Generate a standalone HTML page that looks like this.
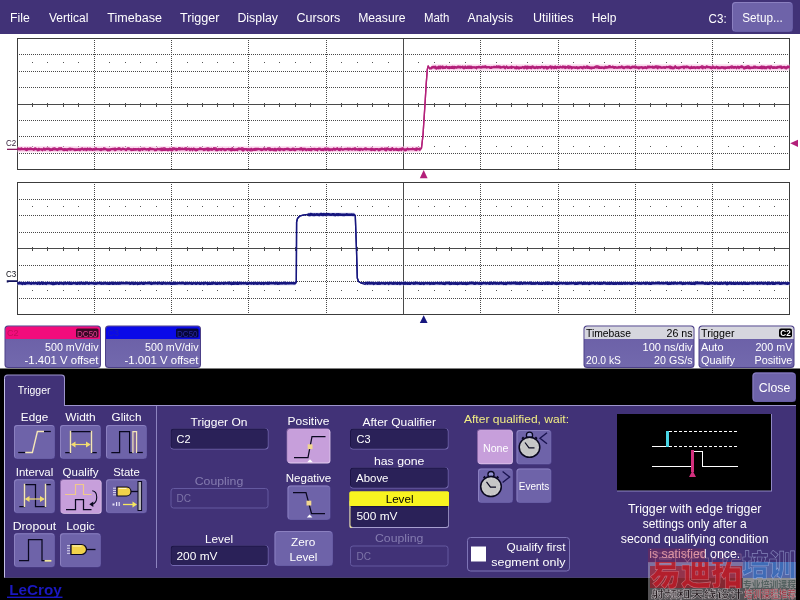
<!DOCTYPE html>
<html lang="en"><head><meta charset="utf-8"><title>LeCroy Trigger Setup</title>
<style>html,body{margin:0;padding:0;background:#fff;overflow:hidden}svg{display:block;position:absolute;left:0;top:0;will-change:transform;-webkit-font-smoothing:antialiased}text{font-family:"Liberation Sans","Noto Sans CJK SC",sans-serif}.cj{font-family:"Liberation Sans","Noto Sans CJK SC",sans-serif;font-weight:900}</style></head><body>
<svg width="800" height="600" viewBox="0 0 800 600">
<rect x="0" y="0" width="800" height="600" fill="#fff"/>
<rect x="0" y="0" width="800" height="34" fill="#413277"/>
<text x="10" y="22" font-size="12.5" fill="#fff" textLength="19.7" lengthAdjust="spacingAndGlyphs">File</text>
<text x="49" y="22" font-size="12.5" fill="#fff" textLength="39.4" lengthAdjust="spacingAndGlyphs">Vertical</text>
<text x="107.3" y="22" font-size="12.5" fill="#fff" textLength="54.7" lengthAdjust="spacingAndGlyphs">Timebase</text>
<text x="180" y="22" font-size="12.5" fill="#fff" textLength="39.4" lengthAdjust="spacingAndGlyphs">Trigger</text>
<text x="237.4" y="22" font-size="12.5" fill="#fff" textLength="40.6" lengthAdjust="spacingAndGlyphs">Display</text>
<text x="296.5" y="22" font-size="12.5" fill="#fff" textLength="43.9" lengthAdjust="spacingAndGlyphs">Cursors</text>
<text x="358.2" y="22" font-size="12.5" fill="#fff" textLength="47.3" lengthAdjust="spacingAndGlyphs">Measure</text>
<text x="424" y="22" font-size="12.5" fill="#fff" textLength="25.4" lengthAdjust="spacingAndGlyphs">Math</text>
<text x="467.6" y="22" font-size="12.5" fill="#fff" textLength="45.4" lengthAdjust="spacingAndGlyphs">Analysis</text>
<text x="533" y="22" font-size="12.5" fill="#fff" textLength="40.5" lengthAdjust="spacingAndGlyphs">Utilities</text>
<text x="591.7" y="22" font-size="12.5" fill="#fff" textLength="24.7" lengthAdjust="spacingAndGlyphs">Help</text>
<text x="708.6" y="23" font-size="12.5" fill="#fff" textLength="18" lengthAdjust="spacingAndGlyphs">C3:</text>
<rect x="732" y="2" width="61" height="30" rx="3.5" fill="#5a4f9a"/>
<rect x="732" y="2" width="60.2" height="29.2" rx="3.5" fill="#8b80c0"/>
<rect x="733" y="3" width="59.2" height="28.2" rx="3.0" fill="#6e63a9"/>
<text x="762.5" y="22" font-size="12.5" fill="#fff" text-anchor="middle" textLength="40.5" lengthAdjust="spacingAndGlyphs">Setup...</text>
<g shape-rendering="crispEdges" fill="none">
<line x1="18.5" y1="54.5" x2="789.5" y2="54.5" stroke="#484848" stroke-width="1" stroke-dasharray="1 1"/>
<line x1="18.5" y1="71.5" x2="789.5" y2="71.5" stroke="#484848" stroke-width="1" stroke-dasharray="1 1"/>
<line x1="18.5" y1="87.5" x2="789.5" y2="87.5" stroke="#484848" stroke-width="1" stroke-dasharray="1 1"/>
<line x1="18.5" y1="120.5" x2="789.5" y2="120.5" stroke="#484848" stroke-width="1" stroke-dasharray="1 1"/>
<line x1="18.5" y1="136.5" x2="789.5" y2="136.5" stroke="#484848" stroke-width="1" stroke-dasharray="1 1"/>
<line x1="18.5" y1="153.5" x2="789.5" y2="153.5" stroke="#484848" stroke-width="1" stroke-dasharray="1 1"/>
<line x1="94.5" y1="39.5" x2="94.5" y2="169.5" stroke="#484848" stroke-width="1" stroke-dasharray="1 1"/>
<line x1="171.5" y1="39.5" x2="171.5" y2="169.5" stroke="#484848" stroke-width="1" stroke-dasharray="1 1"/>
<line x1="248.5" y1="39.5" x2="248.5" y2="169.5" stroke="#484848" stroke-width="1" stroke-dasharray="1 1"/>
<line x1="326.5" y1="39.5" x2="326.5" y2="169.5" stroke="#484848" stroke-width="1" stroke-dasharray="1 1"/>
<line x1="480.5" y1="39.5" x2="480.5" y2="169.5" stroke="#484848" stroke-width="1" stroke-dasharray="1 1"/>
<line x1="558.5" y1="39.5" x2="558.5" y2="169.5" stroke="#484848" stroke-width="1" stroke-dasharray="1 1"/>
<line x1="635.5" y1="39.5" x2="635.5" y2="169.5" stroke="#484848" stroke-width="1" stroke-dasharray="1 1"/>
<line x1="712.5" y1="39.5" x2="712.5" y2="169.5" stroke="#484848" stroke-width="1" stroke-dasharray="1 1"/>
<line x1="17.5" y1="104.5" x2="789.5" y2="104.5" stroke="#4a4a4a" stroke-width="1"/>
<line x1="403.5" y1="38.5" x2="403.5" y2="169.5" stroke="#4a4a4a" stroke-width="1"/>
<line x1="32.5" y1="102.5" x2="32.5" y2="106.5" stroke="#4a4a4a" stroke-width="1"/>
<rect x="32.0" y="62.0" width="1" height="1" fill="#555"/>
<rect x="32.0" y="146.0" width="1" height="1" fill="#555"/>
<line x1="47.5" y1="102.5" x2="47.5" y2="106.5" stroke="#4a4a4a" stroke-width="1"/>
<rect x="47.0" y="62.0" width="1" height="1" fill="#555"/>
<rect x="47.0" y="146.0" width="1" height="1" fill="#555"/>
<line x1="63.5" y1="102.5" x2="63.5" y2="106.5" stroke="#4a4a4a" stroke-width="1"/>
<rect x="63.0" y="62.0" width="1" height="1" fill="#555"/>
<rect x="63.0" y="146.0" width="1" height="1" fill="#555"/>
<line x1="78.5" y1="102.5" x2="78.5" y2="106.5" stroke="#4a4a4a" stroke-width="1"/>
<rect x="78.0" y="62.0" width="1" height="1" fill="#555"/>
<rect x="78.0" y="146.0" width="1" height="1" fill="#555"/>
<line x1="109.5" y1="102.5" x2="109.5" y2="106.5" stroke="#4a4a4a" stroke-width="1"/>
<rect x="109.0" y="62.0" width="1" height="1" fill="#555"/>
<rect x="109.0" y="146.0" width="1" height="1" fill="#555"/>
<line x1="125.5" y1="102.5" x2="125.5" y2="106.5" stroke="#4a4a4a" stroke-width="1"/>
<rect x="125.0" y="62.0" width="1" height="1" fill="#555"/>
<rect x="125.0" y="146.0" width="1" height="1" fill="#555"/>
<line x1="140.5" y1="102.5" x2="140.5" y2="106.5" stroke="#4a4a4a" stroke-width="1"/>
<rect x="140.0" y="62.0" width="1" height="1" fill="#555"/>
<rect x="140.0" y="146.0" width="1" height="1" fill="#555"/>
<line x1="156.5" y1="102.5" x2="156.5" y2="106.5" stroke="#4a4a4a" stroke-width="1"/>
<rect x="156.0" y="62.0" width="1" height="1" fill="#555"/>
<rect x="156.0" y="146.0" width="1" height="1" fill="#555"/>
<line x1="187.5" y1="102.5" x2="187.5" y2="106.5" stroke="#4a4a4a" stroke-width="1"/>
<rect x="187.0" y="62.0" width="1" height="1" fill="#555"/>
<rect x="187.0" y="146.0" width="1" height="1" fill="#555"/>
<line x1="202.5" y1="102.5" x2="202.5" y2="106.5" stroke="#4a4a4a" stroke-width="1"/>
<rect x="202.0" y="62.0" width="1" height="1" fill="#555"/>
<rect x="202.0" y="146.0" width="1" height="1" fill="#555"/>
<line x1="217.5" y1="102.5" x2="217.5" y2="106.5" stroke="#4a4a4a" stroke-width="1"/>
<rect x="217.0" y="62.0" width="1" height="1" fill="#555"/>
<rect x="217.0" y="146.0" width="1" height="1" fill="#555"/>
<line x1="233.5" y1="102.5" x2="233.5" y2="106.5" stroke="#4a4a4a" stroke-width="1"/>
<rect x="233.0" y="62.0" width="1" height="1" fill="#555"/>
<rect x="233.0" y="146.0" width="1" height="1" fill="#555"/>
<line x1="264.5" y1="102.5" x2="264.5" y2="106.5" stroke="#4a4a4a" stroke-width="1"/>
<rect x="264.0" y="62.0" width="1" height="1" fill="#555"/>
<rect x="264.0" y="146.0" width="1" height="1" fill="#555"/>
<line x1="279.5" y1="102.5" x2="279.5" y2="106.5" stroke="#4a4a4a" stroke-width="1"/>
<rect x="279.0" y="62.0" width="1" height="1" fill="#555"/>
<rect x="279.0" y="146.0" width="1" height="1" fill="#555"/>
<line x1="295.5" y1="102.5" x2="295.5" y2="106.5" stroke="#4a4a4a" stroke-width="1"/>
<rect x="295.0" y="62.0" width="1" height="1" fill="#555"/>
<rect x="295.0" y="146.0" width="1" height="1" fill="#555"/>
<line x1="310.5" y1="102.5" x2="310.5" y2="106.5" stroke="#4a4a4a" stroke-width="1"/>
<rect x="310.0" y="62.0" width="1" height="1" fill="#555"/>
<rect x="310.0" y="146.0" width="1" height="1" fill="#555"/>
<line x1="341.5" y1="102.5" x2="341.5" y2="106.5" stroke="#4a4a4a" stroke-width="1"/>
<rect x="341.0" y="62.0" width="1" height="1" fill="#555"/>
<rect x="341.0" y="146.0" width="1" height="1" fill="#555"/>
<line x1="357.5" y1="102.5" x2="357.5" y2="106.5" stroke="#4a4a4a" stroke-width="1"/>
<rect x="357.0" y="62.0" width="1" height="1" fill="#555"/>
<rect x="357.0" y="146.0" width="1" height="1" fill="#555"/>
<line x1="372.5" y1="102.5" x2="372.5" y2="106.5" stroke="#4a4a4a" stroke-width="1"/>
<rect x="372.0" y="62.0" width="1" height="1" fill="#555"/>
<rect x="372.0" y="146.0" width="1" height="1" fill="#555"/>
<line x1="388.5" y1="102.5" x2="388.5" y2="106.5" stroke="#4a4a4a" stroke-width="1"/>
<rect x="388.0" y="62.0" width="1" height="1" fill="#555"/>
<rect x="388.0" y="146.0" width="1" height="1" fill="#555"/>
<line x1="418.5" y1="102.5" x2="418.5" y2="106.5" stroke="#4a4a4a" stroke-width="1"/>
<rect x="418.0" y="62.0" width="1" height="1" fill="#555"/>
<rect x="418.0" y="146.0" width="1" height="1" fill="#555"/>
<line x1="434.5" y1="102.5" x2="434.5" y2="106.5" stroke="#4a4a4a" stroke-width="1"/>
<rect x="434.0" y="62.0" width="1" height="1" fill="#555"/>
<rect x="434.0" y="146.0" width="1" height="1" fill="#555"/>
<line x1="449.5" y1="102.5" x2="449.5" y2="106.5" stroke="#4a4a4a" stroke-width="1"/>
<rect x="449.0" y="62.0" width="1" height="1" fill="#555"/>
<rect x="449.0" y="146.0" width="1" height="1" fill="#555"/>
<line x1="465.5" y1="102.5" x2="465.5" y2="106.5" stroke="#4a4a4a" stroke-width="1"/>
<rect x="465.0" y="62.0" width="1" height="1" fill="#555"/>
<rect x="465.0" y="146.0" width="1" height="1" fill="#555"/>
<line x1="496.5" y1="102.5" x2="496.5" y2="106.5" stroke="#4a4a4a" stroke-width="1"/>
<rect x="496.0" y="62.0" width="1" height="1" fill="#555"/>
<rect x="496.0" y="146.0" width="1" height="1" fill="#555"/>
<line x1="511.5" y1="102.5" x2="511.5" y2="106.5" stroke="#4a4a4a" stroke-width="1"/>
<rect x="511.0" y="62.0" width="1" height="1" fill="#555"/>
<rect x="511.0" y="146.0" width="1" height="1" fill="#555"/>
<line x1="527.5" y1="102.5" x2="527.5" y2="106.5" stroke="#4a4a4a" stroke-width="1"/>
<rect x="527.0" y="62.0" width="1" height="1" fill="#555"/>
<rect x="527.0" y="146.0" width="1" height="1" fill="#555"/>
<line x1="542.5" y1="102.5" x2="542.5" y2="106.5" stroke="#4a4a4a" stroke-width="1"/>
<rect x="542.0" y="62.0" width="1" height="1" fill="#555"/>
<rect x="542.0" y="146.0" width="1" height="1" fill="#555"/>
<line x1="573.5" y1="102.5" x2="573.5" y2="106.5" stroke="#4a4a4a" stroke-width="1"/>
<rect x="573.0" y="62.0" width="1" height="1" fill="#555"/>
<rect x="573.0" y="146.0" width="1" height="1" fill="#555"/>
<line x1="589.5" y1="102.5" x2="589.5" y2="106.5" stroke="#4a4a4a" stroke-width="1"/>
<rect x="589.0" y="62.0" width="1" height="1" fill="#555"/>
<rect x="589.0" y="146.0" width="1" height="1" fill="#555"/>
<line x1="604.5" y1="102.5" x2="604.5" y2="106.5" stroke="#4a4a4a" stroke-width="1"/>
<rect x="604.0" y="62.0" width="1" height="1" fill="#555"/>
<rect x="604.0" y="146.0" width="1" height="1" fill="#555"/>
<line x1="619.5" y1="102.5" x2="619.5" y2="106.5" stroke="#4a4a4a" stroke-width="1"/>
<rect x="619.0" y="62.0" width="1" height="1" fill="#555"/>
<rect x="619.0" y="146.0" width="1" height="1" fill="#555"/>
<line x1="650.5" y1="102.5" x2="650.5" y2="106.5" stroke="#4a4a4a" stroke-width="1"/>
<rect x="650.0" y="62.0" width="1" height="1" fill="#555"/>
<rect x="650.0" y="146.0" width="1" height="1" fill="#555"/>
<line x1="666.5" y1="102.5" x2="666.5" y2="106.5" stroke="#4a4a4a" stroke-width="1"/>
<rect x="666.0" y="62.0" width="1" height="1" fill="#555"/>
<rect x="666.0" y="146.0" width="1" height="1" fill="#555"/>
<line x1="681.5" y1="102.5" x2="681.5" y2="106.5" stroke="#4a4a4a" stroke-width="1"/>
<rect x="681.0" y="62.0" width="1" height="1" fill="#555"/>
<rect x="681.0" y="146.0" width="1" height="1" fill="#555"/>
<line x1="697.5" y1="102.5" x2="697.5" y2="106.5" stroke="#4a4a4a" stroke-width="1"/>
<rect x="697.0" y="62.0" width="1" height="1" fill="#555"/>
<rect x="697.0" y="146.0" width="1" height="1" fill="#555"/>
<line x1="728.5" y1="102.5" x2="728.5" y2="106.5" stroke="#4a4a4a" stroke-width="1"/>
<rect x="728.0" y="62.0" width="1" height="1" fill="#555"/>
<rect x="728.0" y="146.0" width="1" height="1" fill="#555"/>
<line x1="743.5" y1="102.5" x2="743.5" y2="106.5" stroke="#4a4a4a" stroke-width="1"/>
<rect x="743.0" y="62.0" width="1" height="1" fill="#555"/>
<rect x="743.0" y="146.0" width="1" height="1" fill="#555"/>
<line x1="759.5" y1="102.5" x2="759.5" y2="106.5" stroke="#4a4a4a" stroke-width="1"/>
<rect x="759.0" y="62.0" width="1" height="1" fill="#555"/>
<rect x="759.0" y="146.0" width="1" height="1" fill="#555"/>
<line x1="774.5" y1="102.5" x2="774.5" y2="106.5" stroke="#4a4a4a" stroke-width="1"/>
<rect x="774.0" y="62.0" width="1" height="1" fill="#555"/>
<rect x="774.0" y="146.0" width="1" height="1" fill="#555"/>
<rect x="17.5" y="38.5" width="772.0" height="131.0" stroke="#3c3c3c" stroke-width="1"/>
</g>
<g shape-rendering="crispEdges" fill="none">
<line x1="18.5" y1="199.5" x2="789.5" y2="199.5" stroke="#484848" stroke-width="1" stroke-dasharray="1 1"/>
<line x1="18.5" y1="215.5" x2="789.5" y2="215.5" stroke="#484848" stroke-width="1" stroke-dasharray="1 1"/>
<line x1="18.5" y1="232.5" x2="789.5" y2="232.5" stroke="#484848" stroke-width="1" stroke-dasharray="1 1"/>
<line x1="18.5" y1="265.5" x2="789.5" y2="265.5" stroke="#484848" stroke-width="1" stroke-dasharray="1 1"/>
<line x1="18.5" y1="281.5" x2="789.5" y2="281.5" stroke="#484848" stroke-width="1" stroke-dasharray="1 1"/>
<line x1="18.5" y1="298.5" x2="789.5" y2="298.5" stroke="#484848" stroke-width="1" stroke-dasharray="1 1"/>
<line x1="94.5" y1="183.5" x2="94.5" y2="314.5" stroke="#484848" stroke-width="1" stroke-dasharray="1 1"/>
<line x1="171.5" y1="183.5" x2="171.5" y2="314.5" stroke="#484848" stroke-width="1" stroke-dasharray="1 1"/>
<line x1="248.5" y1="183.5" x2="248.5" y2="314.5" stroke="#484848" stroke-width="1" stroke-dasharray="1 1"/>
<line x1="326.5" y1="183.5" x2="326.5" y2="314.5" stroke="#484848" stroke-width="1" stroke-dasharray="1 1"/>
<line x1="480.5" y1="183.5" x2="480.5" y2="314.5" stroke="#484848" stroke-width="1" stroke-dasharray="1 1"/>
<line x1="558.5" y1="183.5" x2="558.5" y2="314.5" stroke="#484848" stroke-width="1" stroke-dasharray="1 1"/>
<line x1="635.5" y1="183.5" x2="635.5" y2="314.5" stroke="#484848" stroke-width="1" stroke-dasharray="1 1"/>
<line x1="712.5" y1="183.5" x2="712.5" y2="314.5" stroke="#484848" stroke-width="1" stroke-dasharray="1 1"/>
<line x1="17.5" y1="248.5" x2="789.5" y2="248.5" stroke="#4a4a4a" stroke-width="1"/>
<line x1="403.5" y1="182.5" x2="403.5" y2="314.5" stroke="#4a4a4a" stroke-width="1"/>
<line x1="32.5" y1="246.5" x2="32.5" y2="250.5" stroke="#4a4a4a" stroke-width="1"/>
<rect x="32.0" y="206.0" width="1" height="1" fill="#555"/>
<rect x="32.0" y="290.0" width="1" height="1" fill="#555"/>
<line x1="47.5" y1="246.5" x2="47.5" y2="250.5" stroke="#4a4a4a" stroke-width="1"/>
<rect x="47.0" y="206.0" width="1" height="1" fill="#555"/>
<rect x="47.0" y="290.0" width="1" height="1" fill="#555"/>
<line x1="63.5" y1="246.5" x2="63.5" y2="250.5" stroke="#4a4a4a" stroke-width="1"/>
<rect x="63.0" y="206.0" width="1" height="1" fill="#555"/>
<rect x="63.0" y="290.0" width="1" height="1" fill="#555"/>
<line x1="78.5" y1="246.5" x2="78.5" y2="250.5" stroke="#4a4a4a" stroke-width="1"/>
<rect x="78.0" y="206.0" width="1" height="1" fill="#555"/>
<rect x="78.0" y="290.0" width="1" height="1" fill="#555"/>
<line x1="109.5" y1="246.5" x2="109.5" y2="250.5" stroke="#4a4a4a" stroke-width="1"/>
<rect x="109.0" y="206.0" width="1" height="1" fill="#555"/>
<rect x="109.0" y="290.0" width="1" height="1" fill="#555"/>
<line x1="125.5" y1="246.5" x2="125.5" y2="250.5" stroke="#4a4a4a" stroke-width="1"/>
<rect x="125.0" y="206.0" width="1" height="1" fill="#555"/>
<rect x="125.0" y="290.0" width="1" height="1" fill="#555"/>
<line x1="140.5" y1="246.5" x2="140.5" y2="250.5" stroke="#4a4a4a" stroke-width="1"/>
<rect x="140.0" y="206.0" width="1" height="1" fill="#555"/>
<rect x="140.0" y="290.0" width="1" height="1" fill="#555"/>
<line x1="156.5" y1="246.5" x2="156.5" y2="250.5" stroke="#4a4a4a" stroke-width="1"/>
<rect x="156.0" y="206.0" width="1" height="1" fill="#555"/>
<rect x="156.0" y="290.0" width="1" height="1" fill="#555"/>
<line x1="187.5" y1="246.5" x2="187.5" y2="250.5" stroke="#4a4a4a" stroke-width="1"/>
<rect x="187.0" y="206.0" width="1" height="1" fill="#555"/>
<rect x="187.0" y="290.0" width="1" height="1" fill="#555"/>
<line x1="202.5" y1="246.5" x2="202.5" y2="250.5" stroke="#4a4a4a" stroke-width="1"/>
<rect x="202.0" y="206.0" width="1" height="1" fill="#555"/>
<rect x="202.0" y="290.0" width="1" height="1" fill="#555"/>
<line x1="217.5" y1="246.5" x2="217.5" y2="250.5" stroke="#4a4a4a" stroke-width="1"/>
<rect x="217.0" y="206.0" width="1" height="1" fill="#555"/>
<rect x="217.0" y="290.0" width="1" height="1" fill="#555"/>
<line x1="233.5" y1="246.5" x2="233.5" y2="250.5" stroke="#4a4a4a" stroke-width="1"/>
<rect x="233.0" y="206.0" width="1" height="1" fill="#555"/>
<rect x="233.0" y="290.0" width="1" height="1" fill="#555"/>
<line x1="264.5" y1="246.5" x2="264.5" y2="250.5" stroke="#4a4a4a" stroke-width="1"/>
<rect x="264.0" y="206.0" width="1" height="1" fill="#555"/>
<rect x="264.0" y="290.0" width="1" height="1" fill="#555"/>
<line x1="279.5" y1="246.5" x2="279.5" y2="250.5" stroke="#4a4a4a" stroke-width="1"/>
<rect x="279.0" y="206.0" width="1" height="1" fill="#555"/>
<rect x="279.0" y="290.0" width="1" height="1" fill="#555"/>
<line x1="295.5" y1="246.5" x2="295.5" y2="250.5" stroke="#4a4a4a" stroke-width="1"/>
<rect x="295.0" y="206.0" width="1" height="1" fill="#555"/>
<rect x="295.0" y="290.0" width="1" height="1" fill="#555"/>
<line x1="310.5" y1="246.5" x2="310.5" y2="250.5" stroke="#4a4a4a" stroke-width="1"/>
<rect x="310.0" y="206.0" width="1" height="1" fill="#555"/>
<rect x="310.0" y="290.0" width="1" height="1" fill="#555"/>
<line x1="341.5" y1="246.5" x2="341.5" y2="250.5" stroke="#4a4a4a" stroke-width="1"/>
<rect x="341.0" y="206.0" width="1" height="1" fill="#555"/>
<rect x="341.0" y="290.0" width="1" height="1" fill="#555"/>
<line x1="357.5" y1="246.5" x2="357.5" y2="250.5" stroke="#4a4a4a" stroke-width="1"/>
<rect x="357.0" y="206.0" width="1" height="1" fill="#555"/>
<rect x="357.0" y="290.0" width="1" height="1" fill="#555"/>
<line x1="372.5" y1="246.5" x2="372.5" y2="250.5" stroke="#4a4a4a" stroke-width="1"/>
<rect x="372.0" y="206.0" width="1" height="1" fill="#555"/>
<rect x="372.0" y="290.0" width="1" height="1" fill="#555"/>
<line x1="388.5" y1="246.5" x2="388.5" y2="250.5" stroke="#4a4a4a" stroke-width="1"/>
<rect x="388.0" y="206.0" width="1" height="1" fill="#555"/>
<rect x="388.0" y="290.0" width="1" height="1" fill="#555"/>
<line x1="418.5" y1="246.5" x2="418.5" y2="250.5" stroke="#4a4a4a" stroke-width="1"/>
<rect x="418.0" y="206.0" width="1" height="1" fill="#555"/>
<rect x="418.0" y="290.0" width="1" height="1" fill="#555"/>
<line x1="434.5" y1="246.5" x2="434.5" y2="250.5" stroke="#4a4a4a" stroke-width="1"/>
<rect x="434.0" y="206.0" width="1" height="1" fill="#555"/>
<rect x="434.0" y="290.0" width="1" height="1" fill="#555"/>
<line x1="449.5" y1="246.5" x2="449.5" y2="250.5" stroke="#4a4a4a" stroke-width="1"/>
<rect x="449.0" y="206.0" width="1" height="1" fill="#555"/>
<rect x="449.0" y="290.0" width="1" height="1" fill="#555"/>
<line x1="465.5" y1="246.5" x2="465.5" y2="250.5" stroke="#4a4a4a" stroke-width="1"/>
<rect x="465.0" y="206.0" width="1" height="1" fill="#555"/>
<rect x="465.0" y="290.0" width="1" height="1" fill="#555"/>
<line x1="496.5" y1="246.5" x2="496.5" y2="250.5" stroke="#4a4a4a" stroke-width="1"/>
<rect x="496.0" y="206.0" width="1" height="1" fill="#555"/>
<rect x="496.0" y="290.0" width="1" height="1" fill="#555"/>
<line x1="511.5" y1="246.5" x2="511.5" y2="250.5" stroke="#4a4a4a" stroke-width="1"/>
<rect x="511.0" y="206.0" width="1" height="1" fill="#555"/>
<rect x="511.0" y="290.0" width="1" height="1" fill="#555"/>
<line x1="527.5" y1="246.5" x2="527.5" y2="250.5" stroke="#4a4a4a" stroke-width="1"/>
<rect x="527.0" y="206.0" width="1" height="1" fill="#555"/>
<rect x="527.0" y="290.0" width="1" height="1" fill="#555"/>
<line x1="542.5" y1="246.5" x2="542.5" y2="250.5" stroke="#4a4a4a" stroke-width="1"/>
<rect x="542.0" y="206.0" width="1" height="1" fill="#555"/>
<rect x="542.0" y="290.0" width="1" height="1" fill="#555"/>
<line x1="573.5" y1="246.5" x2="573.5" y2="250.5" stroke="#4a4a4a" stroke-width="1"/>
<rect x="573.0" y="206.0" width="1" height="1" fill="#555"/>
<rect x="573.0" y="290.0" width="1" height="1" fill="#555"/>
<line x1="589.5" y1="246.5" x2="589.5" y2="250.5" stroke="#4a4a4a" stroke-width="1"/>
<rect x="589.0" y="206.0" width="1" height="1" fill="#555"/>
<rect x="589.0" y="290.0" width="1" height="1" fill="#555"/>
<line x1="604.5" y1="246.5" x2="604.5" y2="250.5" stroke="#4a4a4a" stroke-width="1"/>
<rect x="604.0" y="206.0" width="1" height="1" fill="#555"/>
<rect x="604.0" y="290.0" width="1" height="1" fill="#555"/>
<line x1="619.5" y1="246.5" x2="619.5" y2="250.5" stroke="#4a4a4a" stroke-width="1"/>
<rect x="619.0" y="206.0" width="1" height="1" fill="#555"/>
<rect x="619.0" y="290.0" width="1" height="1" fill="#555"/>
<line x1="650.5" y1="246.5" x2="650.5" y2="250.5" stroke="#4a4a4a" stroke-width="1"/>
<rect x="650.0" y="206.0" width="1" height="1" fill="#555"/>
<rect x="650.0" y="290.0" width="1" height="1" fill="#555"/>
<line x1="666.5" y1="246.5" x2="666.5" y2="250.5" stroke="#4a4a4a" stroke-width="1"/>
<rect x="666.0" y="206.0" width="1" height="1" fill="#555"/>
<rect x="666.0" y="290.0" width="1" height="1" fill="#555"/>
<line x1="681.5" y1="246.5" x2="681.5" y2="250.5" stroke="#4a4a4a" stroke-width="1"/>
<rect x="681.0" y="206.0" width="1" height="1" fill="#555"/>
<rect x="681.0" y="290.0" width="1" height="1" fill="#555"/>
<line x1="697.5" y1="246.5" x2="697.5" y2="250.5" stroke="#4a4a4a" stroke-width="1"/>
<rect x="697.0" y="206.0" width="1" height="1" fill="#555"/>
<rect x="697.0" y="290.0" width="1" height="1" fill="#555"/>
<line x1="728.5" y1="246.5" x2="728.5" y2="250.5" stroke="#4a4a4a" stroke-width="1"/>
<rect x="728.0" y="206.0" width="1" height="1" fill="#555"/>
<rect x="728.0" y="290.0" width="1" height="1" fill="#555"/>
<line x1="743.5" y1="246.5" x2="743.5" y2="250.5" stroke="#4a4a4a" stroke-width="1"/>
<rect x="743.0" y="206.0" width="1" height="1" fill="#555"/>
<rect x="743.0" y="290.0" width="1" height="1" fill="#555"/>
<line x1="759.5" y1="246.5" x2="759.5" y2="250.5" stroke="#4a4a4a" stroke-width="1"/>
<rect x="759.0" y="206.0" width="1" height="1" fill="#555"/>
<rect x="759.0" y="290.0" width="1" height="1" fill="#555"/>
<line x1="774.5" y1="246.5" x2="774.5" y2="250.5" stroke="#4a4a4a" stroke-width="1"/>
<rect x="774.0" y="206.0" width="1" height="1" fill="#555"/>
<rect x="774.0" y="290.0" width="1" height="1" fill="#555"/>
<rect x="17.5" y="182.5" width="772.0" height="132.0" stroke="#3c3c3c" stroke-width="1"/>
</g>
<rect x="17.5" y="146.3" width="403.0" height="6" fill="#f9c6e6" opacity="0.7"/>
<rect x="431.5" y="64.4" width="358.0" height="6" fill="#f9c6e6" opacity="0.7"/>
<rect x="17.5" y="148.3" width="403.0" height="2.0" fill="#b3207a" opacity="1"/>
<rect x="431.5" y="66.4" width="358.0" height="2.0" fill="#b3207a" opacity="1"/>
<path d="M17.5,148.8 L18.8,148.3 L20.0,149.8 L21.2,148.0 L22.5,149.4 L23.8,148.9 L25.0,148.0 L26.2,149.3 L27.5,147.9 L28.8,149.1 L30.0,148.0 L31.2,148.1 L32.5,149.1 L33.8,150.3 L35.0,148.2 L36.2,148.5 L37.5,149.7 L38.8,150.6 L40.0,149.5 L41.2,149.0 L42.5,150.7 L43.8,147.9 L45.0,150.4 L46.2,148.7 L47.5,148.2 L48.8,148.2 L50.0,148.7 L51.2,150.2 L52.5,148.3 L53.8,149.5 L55.0,149.7 L56.2,148.9 L57.5,149.4 L58.8,148.0 L60.0,148.0 L61.2,148.4 L62.5,149.8 L63.8,149.1 L65.0,148.7 L66.2,149.6 L67.5,149.2 L68.8,148.7 L70.0,150.2 L71.2,149.9 L72.5,148.5 L73.8,149.5 L75.0,149.4 L76.2,150.4 L77.5,150.0 L78.8,148.7 L80.0,150.7 L81.2,148.2 L82.5,149.1 L83.8,150.1 L85.0,148.3 L86.2,149.3 L87.5,147.9 L88.8,149.8 L90.0,150.1 L91.2,149.5 L92.5,150.4 L93.8,148.7 L95.0,149.9 L96.2,149.6 L97.5,149.5 L98.8,149.2 L100.0,150.3 L101.2,150.6 L102.5,149.2 L103.8,149.8 L105.0,148.0 L106.2,149.9 L107.5,149.7 L108.8,150.8 L110.0,150.3 L111.2,148.7 L112.5,149.0 L113.8,149.8 L115.0,147.9 L116.2,149.2 L117.5,148.3 L118.8,148.2 L120.0,148.0 L121.2,150.1 L122.5,148.2 L123.8,148.5 L125.0,149.0 L126.2,150.4 L127.5,148.0 L128.8,149.1 L130.0,149.4 L131.2,150.5 L132.5,150.3 L133.8,150.4 L135.0,148.6 L136.2,149.0 L137.5,148.9 L138.8,150.5 L140.0,150.7 L141.2,148.3 L142.5,148.3 L143.8,148.5 L145.0,148.5 L146.2,149.3 L147.5,149.6 L148.8,148.6 L150.0,147.8 L151.2,149.1 L152.5,148.9 L153.8,149.5 L155.0,150.7 L156.2,149.9 L157.5,149.3 L158.8,149.7 L160.0,149.8 L161.2,148.0 L162.5,150.5 L163.8,150.1 L165.0,150.4 L166.2,150.2 L167.5,149.0 L168.8,149.0 L170.0,148.1 L171.2,149.7 L172.5,148.0 L173.8,148.0 L175.0,148.4 L176.2,148.3 L177.5,148.8 L178.8,148.0 L180.0,147.8 L181.2,148.3 L182.5,148.1 L183.8,148.9 L185.0,147.9 L186.2,150.4 L187.5,149.6 L188.8,148.2 L190.0,148.6 L191.2,148.8 L192.5,148.9 L193.8,148.2 L195.0,150.3 L196.2,150.8 L197.5,149.2 L198.8,149.3 L200.0,148.1 L201.2,148.1 L202.5,148.8 L203.8,148.6 L205.0,150.3 L206.2,148.3 L207.5,147.9 L208.8,150.7 L210.0,149.4 L211.2,148.2 L212.5,149.4 L213.8,147.9 L215.0,149.4 L216.2,150.7 L217.5,150.4 L218.8,149.9 L220.0,148.6 L221.2,148.9 L222.5,148.3 L223.8,150.1 L225.0,149.4 L226.2,150.1 L227.5,148.8 L228.8,148.5 L230.0,150.2 L231.2,150.8 L232.5,150.4 L233.8,150.2 L235.0,150.3 L236.2,150.0 L237.5,148.5 L238.8,149.4 L240.0,148.9 L241.2,147.9 L242.5,147.9 L243.8,148.6 L245.0,148.6 L246.2,149.9 L247.5,150.7 L248.8,149.1 L250.0,150.6 L251.2,150.8 L252.5,150.7 L253.8,148.9 L255.0,148.5 L256.2,148.5 L257.5,148.4 L258.8,148.4 L260.0,149.7 L261.2,150.5 L262.5,150.3 L263.8,149.2 L265.0,149.8 L266.2,150.2 L267.5,148.1 L268.8,149.8 L270.0,150.5 L271.2,150.1 L272.5,150.1 L273.8,149.2 L275.0,148.3 L276.2,150.2 L277.5,148.8 L278.8,150.2 L280.0,150.7 L281.2,149.0 L282.5,149.0 L283.8,150.6 L285.0,150.0 L286.2,148.3 L287.5,148.2 L288.8,148.3 L290.0,150.5 L291.2,150.2 L292.5,148.2 L293.8,150.3 L295.0,150.7 L296.2,149.8 L297.5,148.9 L298.8,149.4 L300.0,148.2 L301.2,147.8 L302.5,150.7 L303.8,149.7 L305.0,149.4 L306.2,150.6 L307.5,149.1 L308.8,150.4 L310.0,150.3 L311.2,148.4 L312.5,148.6 L313.8,148.7 L315.0,148.5 L316.2,149.6 L317.5,148.6 L318.8,149.1 L320.0,148.2 L321.2,150.5 L322.5,148.9 L323.8,149.2 L325.0,149.6 L326.2,150.5 L327.5,149.1 L328.8,150.6 L330.0,149.3 L331.2,149.4 L332.5,149.4 L333.8,147.9 L335.0,149.1 L336.2,148.3 L337.5,147.8 L338.8,150.2 L340.0,148.3 L341.2,149.2 L342.5,150.0 L343.8,149.5 L345.0,148.8 L346.2,149.4 L347.5,149.5 L348.8,150.2 L350.0,148.1 L351.2,149.5 L352.5,148.5 L353.8,148.6 L355.0,150.1 L356.2,149.3 L357.5,149.5 L358.8,150.1 L360.0,150.5 L361.2,149.1 L362.5,149.6 L363.8,149.3 L365.0,149.3 L366.2,149.9 L367.5,149.2 L368.8,149.4 L370.0,149.2 L371.2,150.6 L372.5,149.9 L373.8,150.4 L375.0,150.6 L376.2,148.6 L377.5,149.5 L378.8,150.6 L380.0,150.3 L381.2,148.2 L382.5,148.2 L383.8,149.1 L385.0,148.0 L386.2,148.5 L387.5,148.0 L388.8,149.8 L390.0,150.2 L391.2,150.5 L392.5,148.3 L393.8,149.9 L395.0,149.8 L396.2,148.2 L397.5,150.4 L398.8,150.7 L400.0,148.5 L401.2,150.7 L402.5,149.0 L403.8,149.3 L405.0,150.8 L406.2,150.3 L407.5,148.3 L408.8,149.1 L410.0,149.3 L411.2,148.8 L412.5,148.4 L413.8,148.8 L415.0,150.0 L416.2,147.9 L417.5,149.5 L418.8,149.1 L420.0,147.9 L420.5,149.3 L421.5,148.0 L423.0,135.0 L425.0,104.0 L426.2,84.0 L427.3,69.5 L428.2,66.0 L429.8,68.8 L431.5,66.9 L432.8,67.8 L434.0,67.4 L435.2,66.1 L436.5,68.9 L437.8,68.3 L439.0,68.8 L440.2,66.2 L441.5,66.7 L442.8,66.0 L444.0,68.2 L445.2,66.7 L446.5,66.3 L447.8,67.2 L449.0,68.6 L450.2,68.4 L451.5,66.7 L452.8,66.3 L454.0,68.7 L455.2,67.6 L456.5,68.0 L457.8,66.2 L459.0,66.1 L460.2,68.0 L461.5,67.2 L462.8,66.1 L464.0,68.7 L465.2,67.8 L466.5,68.3 L467.8,66.2 L469.0,68.5 L470.2,66.1 L471.5,68.5 L472.8,67.3 L474.0,66.9 L475.2,67.6 L476.5,68.7 L477.8,66.7 L479.0,66.3 L480.2,67.5 L481.5,66.6 L482.8,66.2 L484.0,66.4 L485.2,66.1 L486.5,66.5 L487.8,66.8 L489.0,66.8 L490.2,68.2 L491.5,66.8 L492.8,67.4 L494.0,66.4 L495.2,66.9 L496.5,66.0 L497.8,66.7 L499.0,65.9 L500.2,68.1 L501.5,67.6 L502.8,66.5 L504.0,67.3 L505.2,68.7 L506.5,66.2 L507.8,68.4 L509.0,67.2 L510.2,67.4 L511.5,68.4 L512.8,67.1 L514.0,67.4 L515.2,68.0 L516.5,68.8 L517.8,66.9 L519.0,68.4 L520.2,68.0 L521.5,67.8 L522.8,67.1 L524.0,66.9 L525.2,66.1 L526.5,66.3 L527.8,66.1 L529.0,68.1 L530.2,66.7 L531.5,66.4 L532.8,66.2 L534.0,68.4 L535.2,68.5 L536.5,67.9 L537.8,66.7 L539.0,66.6 L540.2,66.8 L541.5,67.3 L542.8,66.4 L544.0,67.2 L545.2,66.7 L546.5,68.8 L547.8,68.8 L549.0,67.5 L550.2,66.6 L551.5,68.8 L552.8,66.8 L554.0,67.0 L555.2,65.9 L556.5,67.0 L557.8,67.3 L559.0,67.4 L560.2,66.5 L561.5,67.4 L562.8,65.9 L564.0,66.7 L565.2,66.2 L566.5,67.1 L567.8,66.0 L569.0,66.0 L570.2,66.8 L571.5,66.6 L572.8,67.7 L574.0,67.5 L575.2,68.2 L576.5,67.9 L577.8,68.0 L579.0,68.5 L580.2,67.1 L581.5,66.9 L582.8,68.9 L584.0,66.3 L585.2,68.1 L586.5,67.8 L587.8,66.0 L589.0,68.4 L590.2,68.6 L591.5,67.8 L592.8,68.1 L594.0,68.3 L595.2,66.3 L596.5,67.5 L597.8,67.4 L599.0,68.4 L600.2,68.3 L601.5,68.4 L602.8,67.7 L604.0,68.6 L605.2,67.9 L606.5,68.0 L607.8,66.6 L609.0,66.0 L610.2,66.3 L611.5,67.0 L612.8,66.2 L614.0,68.4 L615.2,67.6 L616.5,67.8 L617.8,67.8 L619.0,67.9 L620.2,67.4 L621.5,65.9 L622.8,68.3 L624.0,68.1 L625.2,67.4 L626.5,67.5 L627.8,67.9 L629.0,66.1 L630.2,68.1 L631.5,66.7 L632.8,66.1 L634.0,66.7 L635.2,68.1 L636.5,66.5 L637.8,68.1 L639.0,68.8 L640.2,67.4 L641.5,67.0 L642.8,67.3 L644.0,68.0 L645.2,68.2 L646.5,67.8 L647.8,67.8 L649.0,66.1 L650.2,66.3 L651.5,66.7 L652.8,68.1 L654.0,66.8 L655.2,67.6 L656.5,65.9 L657.8,66.1 L659.0,66.7 L660.2,67.9 L661.5,68.0 L662.8,67.9 L664.0,66.8 L665.2,67.4 L666.5,67.3 L667.8,67.3 L669.0,66.3 L670.2,68.6 L671.5,66.5 L672.8,68.8 L674.0,68.7 L675.2,66.0 L676.5,67.3 L677.8,68.4 L679.0,68.8 L680.2,67.2 L681.5,66.7 L682.8,66.5 L684.0,68.7 L685.2,66.5 L686.5,67.6 L687.8,66.3 L689.0,67.5 L690.2,68.8 L691.5,66.3 L692.8,68.4 L694.0,67.4 L695.2,68.6 L696.5,68.0 L697.8,66.6 L699.0,68.6 L700.2,67.4 L701.5,66.0 L702.8,65.9 L704.0,67.4 L705.2,67.3 L706.5,66.8 L707.8,66.3 L709.0,66.9 L710.2,66.8 L711.5,68.4 L712.8,65.9 L714.0,68.2 L715.2,68.4 L716.5,66.3 L717.8,68.7 L719.0,68.0 L720.2,68.6 L721.5,66.8 L722.8,67.0 L724.0,67.1 L725.2,68.9 L726.5,67.7 L727.8,67.0 L729.0,67.2 L730.2,66.7 L731.5,66.0 L732.8,66.2 L734.0,68.4 L735.2,66.8 L736.5,68.7 L737.8,66.6 L739.0,66.7 L740.2,67.4 L741.5,66.5 L742.8,67.0 L744.0,68.8 L745.2,68.6 L746.5,68.3 L747.8,67.8 L749.0,68.6 L750.2,68.7 L751.5,67.5 L752.8,68.1 L754.0,66.0 L755.2,68.1 L756.5,67.3 L757.8,68.2 L759.0,67.8 L760.2,66.8 L761.5,66.0 L762.8,68.7 L764.0,66.3 L765.2,67.3 L766.5,66.9 L767.8,66.8 L769.0,68.1 L770.2,68.8 L771.5,66.7 L772.8,67.9 L774.0,66.8 L775.2,67.6 L776.5,67.1 L777.8,66.4 L779.0,66.4 L780.2,66.5 L781.5,68.6 L782.8,67.4 L784.0,66.6 L785.2,68.6 L786.5,68.9 L787.8,67.2 L789.0,66.3 L789.5,67.4" fill="none" stroke="#b3207a" stroke-width="1.35" stroke-linejoin="round"/>
<path d="M17.5,148.4 L18.8,148.1 L20.0,148.8 L21.2,148.1 L22.5,148.5 L23.8,148.6 L25.0,149.5 L26.2,150.5 L27.5,150.0 L28.8,149.0 L30.0,149.0 L31.2,149.4 L32.5,148.9 L33.8,148.8 L35.0,148.0 L36.2,148.6 L37.5,150.7 L38.8,148.2 L40.0,149.3 L41.2,149.7 L42.5,150.4 L43.8,148.4 L45.0,148.6 L46.2,148.5 L47.5,149.0 L48.8,149.1 L50.0,150.7 L51.2,150.3 L52.5,150.4 L53.8,147.9 L55.0,147.9 L56.2,149.9 L57.5,150.5 L58.8,149.2 L60.0,149.6 L61.2,147.8 L62.5,149.0 L63.8,150.6 L65.0,150.3 L66.2,150.4 L67.5,150.7 L68.8,148.5 L70.0,148.1 L71.2,148.3 L72.5,149.4 L73.8,149.8 L75.0,150.6 L76.2,150.0 L77.5,149.7 L78.8,150.1 L80.0,149.2 L81.2,149.5 L82.5,147.9 L83.8,150.1 L85.0,148.5 L86.2,150.6 L87.5,149.7 L88.8,148.7 L90.0,148.2 L91.2,148.6 L92.5,149.7 L93.8,149.9 L95.0,148.1 L96.2,148.0 L97.5,149.4 L98.8,149.5 L100.0,149.0 L101.2,148.5 L102.5,149.6 L103.8,147.8 L105.0,148.7 L106.2,149.2 L107.5,150.7 L108.8,149.7 L110.0,150.5 L111.2,149.2 L112.5,148.5 L113.8,148.5 L115.0,150.7 L116.2,149.9 L117.5,148.7 L118.8,147.9 L120.0,149.3 L121.2,149.8 L122.5,149.1 L123.8,148.6 L125.0,149.8 L126.2,150.6 L127.5,148.5 L128.8,147.9 L130.0,148.8 L131.2,149.1 L132.5,149.8 L133.8,148.4 L135.0,150.2 L136.2,150.0 L137.5,149.3 L138.8,148.4 L140.0,150.7 L141.2,148.7 L142.5,150.3 L143.8,148.5 L145.0,148.5 L146.2,150.1 L147.5,148.7 L148.8,150.7 L150.0,149.3 L151.2,148.4 L152.5,148.5 L153.8,149.1 L155.0,149.8 L156.2,150.6 L157.5,148.2 L158.8,149.0 L160.0,148.4 L161.2,150.7 L162.5,148.2 L163.8,148.0 L165.0,148.0 L166.2,149.0 L167.5,150.5 L168.8,150.5 L170.0,150.0 L171.2,150.8 L172.5,150.6 L173.8,148.8 L175.0,148.4 L176.2,150.6 L177.5,150.0 L178.8,147.9 L180.0,149.8 L181.2,148.9 L182.5,148.9 L183.8,148.8 L185.0,148.3 L186.2,147.8 L187.5,148.6 L188.8,148.9 L190.0,150.7 L191.2,148.2 L192.5,150.7 L193.8,148.4 L195.0,148.9 L196.2,150.3 L197.5,150.3 L198.8,149.1 L200.0,147.9 L201.2,149.2 L202.5,148.9 L203.8,150.6 L205.0,148.4 L206.2,148.9 L207.5,150.5 L208.8,147.9 L210.0,149.0 L211.2,150.2 L212.5,150.1 L213.8,147.9 L215.0,147.9 L216.2,148.0 L217.5,150.6 L218.8,148.6 L220.0,150.0 L221.2,150.5 L222.5,148.8 L223.8,148.6 L225.0,150.7 L226.2,149.7 L227.5,148.6 L228.8,149.9 L230.0,148.7 L231.2,148.6 L232.5,147.8 L233.8,150.1 L235.0,150.5 L236.2,149.7 L237.5,150.6 L238.8,147.9 L240.0,148.5 L241.2,149.2 L242.5,150.7 L243.8,150.7 L245.0,149.0 L246.2,148.6 L247.5,149.1 L248.8,149.3 L250.0,150.6 L251.2,148.3 L252.5,150.2 L253.8,150.0 L255.0,150.3 L256.2,150.1 L257.5,149.6 L258.8,148.8 L260.0,148.8 L261.2,148.9 L262.5,150.1 L263.8,148.0 L265.0,148.4 L266.2,150.1 L267.5,148.5 L268.8,148.0 L270.0,147.9 L271.2,149.5 L272.5,148.8 L273.8,150.7 L275.0,150.5 L276.2,150.8 L277.5,148.6 L278.8,148.1 L280.0,148.1 L281.2,149.3 L282.5,149.9 L283.8,149.1 L285.0,148.5 L286.2,149.1 L287.5,149.7 L288.8,149.8 L290.0,150.0 L291.2,150.3 L292.5,149.8 L293.8,148.2 L295.0,150.3 L296.2,148.7 L297.5,149.5 L298.8,148.9 L300.0,150.0 L301.2,148.4 L302.5,148.5 L303.8,148.5 L305.0,148.3 L306.2,150.5 L307.5,149.5 L308.8,148.8 L310.0,149.0 L311.2,150.8 L312.5,149.3 L313.8,148.5 L315.0,150.2 L316.2,149.8 L317.5,150.8 L318.8,148.1 L320.0,149.2 L321.2,150.3 L322.5,150.3 L323.8,150.5 L325.0,147.9 L326.2,148.7 L327.5,148.2 L328.8,148.4 L330.0,150.7 L331.2,149.5 L332.5,150.6 L333.8,148.9 L335.0,150.4 L336.2,149.1 L337.5,148.6 L338.8,150.1 L340.0,150.6 L341.2,148.1 L342.5,149.6 L343.8,149.7 L345.0,148.5 L346.2,148.9 L347.5,148.2 L348.8,148.4 L350.0,148.6 L351.2,149.6 L352.5,149.8 L353.8,148.4 L355.0,147.8 L356.2,148.8 L357.5,149.8 L358.8,148.4 L360.0,148.7 L361.2,148.4 L362.5,150.2 L363.8,149.4 L365.0,148.0 L366.2,148.1 L367.5,149.0 L368.8,149.5 L370.0,149.7 L371.2,148.1 L372.5,148.3 L373.8,149.9 L375.0,149.0 L376.2,148.6 L377.5,148.7 L378.8,150.7 L380.0,148.7 L381.2,149.5 L382.5,148.9 L383.8,149.0 L385.0,150.4 L386.2,150.8 L387.5,148.9 L388.8,148.4 L390.0,150.0 L391.2,148.4 L392.5,147.8 L393.8,150.5 L395.0,149.1 L396.2,150.3 L397.5,149.0 L398.8,150.4 L400.0,149.2 L401.2,148.3 L402.5,147.8 L403.8,149.5 L405.0,149.7 L406.2,150.5 L407.5,148.1 L408.8,149.7 L410.0,148.9 L411.2,149.3 L412.5,148.2 L413.8,148.6 L415.0,149.4 L416.2,150.6 L417.5,148.1 L418.8,149.3 L420.0,150.2 L420.5,149.3 L421.5,148.0 L423.0,135.0 L425.0,104.0 L426.2,84.0 L427.3,69.5 L428.2,66.0 L429.8,68.8 L431.5,68.8 L432.8,66.5 L434.0,66.3 L435.2,68.7 L436.5,68.8 L437.8,67.3 L439.0,66.1 L440.2,68.7 L441.5,67.1 L442.8,68.6 L444.0,67.8 L445.2,68.4 L446.5,66.4 L447.8,68.3 L449.0,66.6 L450.2,67.1 L451.5,68.4 L452.8,68.4 L454.0,66.4 L455.2,66.6 L456.5,67.1 L457.8,67.5 L459.0,67.1 L460.2,66.3 L461.5,66.6 L462.8,68.1 L464.0,68.6 L465.2,66.0 L466.5,67.6 L467.8,68.2 L469.0,66.0 L470.2,68.4 L471.5,66.3 L472.8,67.7 L474.0,67.6 L475.2,67.8 L476.5,66.8 L477.8,67.2 L479.0,67.6 L480.2,67.2 L481.5,67.9 L482.8,67.2 L484.0,67.2 L485.2,66.0 L486.5,67.8 L487.8,67.4 L489.0,66.6 L490.2,68.2 L491.5,68.2 L492.8,67.3 L494.0,66.4 L495.2,67.3 L496.5,66.2 L497.8,66.3 L499.0,67.2 L500.2,66.2 L501.5,67.2 L502.8,67.4 L504.0,66.0 L505.2,67.8 L506.5,66.1 L507.8,68.1 L509.0,68.2 L510.2,67.4 L511.5,66.1 L512.8,67.4 L514.0,67.0 L515.2,68.8 L516.5,66.3 L517.8,68.5 L519.0,68.9 L520.2,68.1 L521.5,68.3 L522.8,66.5 L524.0,68.8 L525.2,67.4 L526.5,68.8 L527.8,68.6 L529.0,66.4 L530.2,68.3 L531.5,68.7 L532.8,66.1 L534.0,67.0 L535.2,68.2 L536.5,66.4 L537.8,68.6 L539.0,66.7 L540.2,68.3 L541.5,66.3 L542.8,67.4 L544.0,68.7 L545.2,66.5 L546.5,66.7 L547.8,67.4 L549.0,66.9 L550.2,66.0 L551.5,66.4 L552.8,66.4 L554.0,68.7 L555.2,67.9 L556.5,68.6 L557.8,66.4 L559.0,68.3 L560.2,66.2 L561.5,67.5 L562.8,67.8 L564.0,67.0 L565.2,68.5 L566.5,67.6 L567.8,67.6 L569.0,68.5 L570.2,66.2 L571.5,68.9 L572.8,67.8 L574.0,67.1 L575.2,68.3 L576.5,66.7 L577.8,68.9 L579.0,67.6 L580.2,67.0 L581.5,68.2 L582.8,67.2 L584.0,66.4 L585.2,68.1 L586.5,66.0 L587.8,68.4 L589.0,66.7 L590.2,67.8 L591.5,68.9 L592.8,67.7 L594.0,67.9 L595.2,66.8 L596.5,65.9 L597.8,66.0 L599.0,66.3 L600.2,67.7 L601.5,67.2 L602.8,67.4 L604.0,68.6 L605.2,66.3 L606.5,66.6 L607.8,67.9 L609.0,66.0 L610.2,65.9 L611.5,67.0 L612.8,66.2 L614.0,67.0 L615.2,66.6 L616.5,67.7 L617.8,67.7 L619.0,66.5 L620.2,67.8 L621.5,67.3 L622.8,66.3 L624.0,68.7 L625.2,66.6 L626.5,66.3 L627.8,66.2 L629.0,67.8 L630.2,68.5 L631.5,68.2 L632.8,67.1 L634.0,66.7 L635.2,65.9 L636.5,67.8 L637.8,67.6 L639.0,67.0 L640.2,67.8 L641.5,67.2 L642.8,68.7 L644.0,68.1 L645.2,66.6 L646.5,68.6 L647.8,66.0 L649.0,67.5 L650.2,67.1 L651.5,66.6 L652.8,66.1 L654.0,68.2 L655.2,65.9 L656.5,67.6 L657.8,68.7 L659.0,66.3 L660.2,66.5 L661.5,67.7 L662.8,67.4 L664.0,67.8 L665.2,68.3 L666.5,66.4 L667.8,66.8 L669.0,66.8 L670.2,66.0 L671.5,68.6 L672.8,68.2 L674.0,68.0 L675.2,65.9 L676.5,68.4 L677.8,68.1 L679.0,67.3 L680.2,68.1 L681.5,67.3 L682.8,66.6 L684.0,66.2 L685.2,66.6 L686.5,66.0 L687.8,66.9 L689.0,68.1 L690.2,68.0 L691.5,68.4 L692.8,68.0 L694.0,66.7 L695.2,67.6 L696.5,67.2 L697.8,68.3 L699.0,67.5 L700.2,66.7 L701.5,67.8 L702.8,68.8 L704.0,66.6 L705.2,68.5 L706.5,65.9 L707.8,66.7 L709.0,66.6 L710.2,68.1 L711.5,68.7 L712.8,68.1 L714.0,66.9 L715.2,68.5 L716.5,66.9 L717.8,66.6 L719.0,68.6 L720.2,67.8 L721.5,68.0 L722.8,67.9 L724.0,68.8 L725.2,67.3 L726.5,68.4 L727.8,68.0 L729.0,68.5 L730.2,67.2 L731.5,68.1 L732.8,67.6 L734.0,66.8 L735.2,66.5 L736.5,67.8 L737.8,66.1 L739.0,68.6 L740.2,66.3 L741.5,66.0 L742.8,66.2 L744.0,68.7 L745.2,66.9 L746.5,66.3 L747.8,66.0 L749.0,66.0 L750.2,68.0 L751.5,67.8 L752.8,68.0 L754.0,68.1 L755.2,66.1 L756.5,67.7 L757.8,67.0 L759.0,68.4 L760.2,68.4 L761.5,68.6 L762.8,66.1 L764.0,68.5 L765.2,68.6 L766.5,68.7 L767.8,66.2 L769.0,66.5 L770.2,66.2 L771.5,66.0 L772.8,68.4 L774.0,68.3 L775.2,67.8 L776.5,68.4 L777.8,67.8 L779.0,66.8 L780.2,66.2 L781.5,66.2 L782.8,68.2 L784.0,66.5 L785.2,66.9 L786.5,67.2 L787.8,66.0 L789.0,66.7 L789.5,67.4" fill="none" stroke="#b3207a" stroke-width="1.35" stroke-linejoin="round"/>
<rect x="17.5" y="281.1" width="278.0" height="4.4" fill="#d0d0f4" opacity="0.6"/>
<rect x="308" y="212.4" width="46.5" height="4.4" fill="#d0d0f4" opacity="0.6"/>
<rect x="365" y="281.1" width="424.5" height="4.4" fill="#d0d0f4" opacity="0.6"/>
<rect x="17.5" y="282.1" width="278.0" height="2.4" fill="#16167e" opacity="1"/>
<rect x="308" y="213.4" width="46.5" height="2.4" fill="#16167e" opacity="1"/>
<rect x="365" y="282.1" width="424.5" height="2.4" fill="#16167e" opacity="1"/>
<path d="M17.5,282.8 L18.8,283.8 L20.0,283.0 L21.2,282.9 L22.5,284.5 L23.8,283.3 L25.0,284.2 L26.2,283.6 L27.5,282.1 L28.8,283.1 L30.0,283.1 L31.2,284.0 L32.5,282.9 L33.8,283.8 L35.0,283.4 L36.2,282.6 L37.5,284.2 L38.8,282.3 L40.0,284.1 L41.2,282.5 L42.5,282.1 L43.8,282.6 L45.0,284.0 L46.2,284.5 L47.5,282.1 L48.8,283.3 L50.0,283.3 L51.2,284.0 L52.5,282.5 L53.8,283.3 L55.0,282.9 L56.2,284.1 L57.5,282.7 L58.8,284.4 L60.0,282.8 L61.2,282.6 L62.5,283.8 L63.8,283.3 L65.0,282.3 L66.2,283.6 L67.5,282.3 L68.8,284.0 L70.0,283.8 L71.2,284.0 L72.5,283.6 L73.8,282.9 L75.0,283.1 L76.2,283.0 L77.5,284.3 L78.8,282.3 L80.0,284.3 L81.2,282.1 L82.5,282.6 L83.8,282.7 L85.0,284.3 L86.2,283.3 L87.5,283.0 L88.8,284.3 L90.0,282.6 L91.2,283.2 L92.5,283.4 L93.8,283.9 L95.0,283.9 L96.2,283.7 L97.5,282.9 L98.8,282.9 L100.0,282.4 L101.2,284.2 L102.5,283.7 L103.8,283.9 L105.0,282.5 L106.2,283.1 L107.5,284.0 L108.8,283.5 L110.0,282.4 L111.2,283.2 L112.5,284.3 L113.8,282.6 L115.0,282.5 L116.2,282.8 L117.5,283.8 L118.8,284.2 L120.0,282.4 L121.2,282.4 L122.5,282.7 L123.8,282.9 L125.0,283.4 L126.2,282.5 L127.5,282.9 L128.8,282.5 L130.0,284.5 L131.2,283.9 L132.5,282.3 L133.8,284.5 L135.0,282.3 L136.2,283.0 L137.5,284.5 L138.8,284.0 L140.0,283.9 L141.2,283.1 L142.5,282.5 L143.8,283.6 L145.0,282.3 L146.2,282.6 L147.5,283.0 L148.8,282.1 L150.0,283.0 L151.2,284.0 L152.5,283.8 L153.8,283.3 L155.0,283.6 L156.2,283.2 L157.5,282.4 L158.8,283.6 L160.0,283.1 L161.2,283.9 L162.5,284.3 L163.8,283.1 L165.0,283.5 L166.2,283.9 L167.5,283.1 L168.8,282.6 L170.0,283.9 L171.2,284.3 L172.5,284.0 L173.8,283.8 L175.0,284.2 L176.2,283.7 L177.5,283.7 L178.8,283.2 L180.0,282.8 L181.2,283.6 L182.5,282.3 L183.8,283.1 L185.0,284.0 L186.2,283.8 L187.5,283.6 L188.8,282.7 L190.0,283.1 L191.2,283.2 L192.5,283.6 L193.8,283.1 L195.0,283.7 L196.2,284.4 L197.5,282.5 L198.8,283.7 L200.0,284.0 L201.2,283.0 L202.5,283.3 L203.8,284.5 L205.0,282.1 L206.2,283.4 L207.5,282.5 L208.8,284.0 L210.0,284.4 L211.2,283.3 L212.5,282.3 L213.8,283.5 L215.0,283.4 L216.2,283.8 L217.5,283.3 L218.8,283.6 L220.0,284.1 L221.2,283.4 L222.5,283.1 L223.8,284.4 L225.0,282.6 L226.2,283.8 L227.5,283.0 L228.8,284.0 L230.0,282.4 L231.2,284.5 L232.5,282.9 L233.8,282.2 L235.0,282.7 L236.2,283.0 L237.5,282.1 L238.8,283.1 L240.0,283.1 L241.2,283.8 L242.5,282.9 L243.8,282.7 L245.0,282.6 L246.2,283.9 L247.5,284.4 L248.8,283.4 L250.0,282.6 L251.2,284.1 L252.5,283.0 L253.8,282.6 L255.0,282.4 L256.2,284.0 L257.5,284.1 L258.8,283.6 L260.0,283.2 L261.2,283.5 L262.5,282.6 L263.8,284.5 L265.0,282.9 L266.2,283.6 L267.5,284.1 L268.8,284.1 L270.0,283.2 L271.2,282.8 L272.5,283.4 L273.8,282.4 L275.0,284.1 L276.2,282.9 L277.5,284.2 L278.8,282.7 L280.0,283.0 L281.2,282.7 L282.5,283.1 L283.8,282.5 L285.0,282.1 L286.2,283.9 L287.5,282.8 L288.8,282.7 L290.0,282.8 L291.2,283.2 L292.5,283.1 L293.8,283.6 L295.0,283.7 L295.5,283.3 L296.3,282.0 L296.6,222.0 L297.5,218.5 L299.5,216.2 L303.0,215.2 L308.0,214.3 L309.2,215.7 L310.5,215.5 L311.8,213.5 L313.0,215.4 L314.2,215.6 L315.5,215.3 L316.8,213.7 L318.0,215.4 L319.2,214.9 L320.5,213.4 L321.8,213.4 L323.0,215.7 L324.2,215.0 L325.5,214.0 L326.8,213.6 L328.0,213.7 L329.2,213.9 L330.5,215.3 L331.8,214.2 L333.0,213.7 L334.2,215.6 L335.5,215.3 L336.8,213.8 L338.0,215.6 L339.2,214.9 L340.5,215.3 L341.8,215.0 L343.0,215.6 L344.2,215.3 L345.5,215.4 L346.8,213.8 L348.0,215.1 L349.2,214.7 L350.5,215.2 L351.8,214.4 L353.0,215.6 L354.2,214.7 L354.5,214.6 L355.3,216.0 L356.5,250.0 L357.3,278.0 L358.5,281.5 L361.0,283.0 L365.0,282.7 L366.2,282.6 L367.5,282.4 L368.8,283.3 L370.0,282.2 L371.2,283.2 L372.5,282.4 L373.8,283.3 L375.0,283.3 L376.2,283.4 L377.5,284.2 L378.8,282.1 L380.0,284.2 L381.2,283.2 L382.5,283.5 L383.8,283.7 L385.0,284.2 L386.2,283.0 L387.5,283.1 L388.8,284.5 L390.0,282.2 L391.2,283.6 L392.5,283.6 L393.8,282.1 L395.0,283.6 L396.2,283.8 L397.5,284.4 L398.8,282.9 L400.0,284.5 L401.2,283.3 L402.5,283.3 L403.8,284.3 L405.0,282.1 L406.2,283.8 L407.5,283.6 L408.8,282.9 L410.0,284.2 L411.2,283.0 L412.5,283.2 L413.8,283.4 L415.0,284.0 L416.2,282.6 L417.5,283.1 L418.8,283.1 L420.0,283.4 L421.2,284.1 L422.5,282.8 L423.8,284.1 L425.0,283.1 L426.2,283.3 L427.5,282.7 L428.8,283.3 L430.0,284.5 L431.2,283.7 L432.5,284.0 L433.8,282.9 L435.0,282.8 L436.2,282.8 L437.5,283.5 L438.8,283.6 L440.0,284.0 L441.2,282.2 L442.5,283.9 L443.8,284.3 L445.0,283.4 L446.2,282.2 L447.5,282.8 L448.8,282.1 L450.0,282.5 L451.2,284.4 L452.5,283.6 L453.8,283.7 L455.0,284.0 L456.2,284.3 L457.5,283.6 L458.8,283.6 L460.0,283.6 L461.2,283.8 L462.5,283.5 L463.8,283.8 L465.0,282.6 L466.2,283.7 L467.5,283.2 L468.8,284.0 L470.0,282.3 L471.2,282.5 L472.5,282.1 L473.8,284.0 L475.0,284.3 L476.2,283.7 L477.5,283.0 L478.8,284.1 L480.0,284.0 L481.2,283.5 L482.5,282.7 L483.8,282.8 L485.0,283.1 L486.2,282.8 L487.5,283.1 L488.8,283.7 L490.0,284.4 L491.2,282.2 L492.5,283.5 L493.8,282.1 L495.0,282.3 L496.2,284.1 L497.5,283.5 L498.8,284.3 L500.0,283.2 L501.2,282.1 L502.5,283.0 L503.8,283.5 L505.0,284.4 L506.2,284.5 L507.5,283.2 L508.8,283.1 L510.0,282.3 L511.2,283.7 L512.5,282.6 L513.8,282.4 L515.0,282.1 L516.2,282.1 L517.5,283.8 L518.8,282.4 L520.0,284.5 L521.2,282.3 L522.5,284.2 L523.8,282.4 L525.0,282.1 L526.2,283.8 L527.5,282.7 L528.8,283.9 L530.0,282.5 L531.2,282.2 L532.5,284.0 L533.8,283.8 L535.0,284.2 L536.2,283.9 L537.5,282.3 L538.8,283.6 L540.0,283.8 L541.2,283.2 L542.5,284.4 L543.8,282.7 L545.0,284.5 L546.2,283.8 L547.5,282.1 L548.8,282.1 L550.0,283.7 L551.2,284.1 L552.5,282.2 L553.8,282.8 L555.0,283.9 L556.2,282.5 L557.5,284.2 L558.8,283.3 L560.0,282.2 L561.2,283.0 L562.5,283.5 L563.8,283.1 L565.0,283.7 L566.2,282.4 L567.5,284.0 L568.8,283.0 L570.0,283.7 L571.2,283.6 L572.5,283.1 L573.8,283.0 L575.0,284.0 L576.2,284.4 L577.5,284.0 L578.8,283.5 L580.0,282.8 L581.2,282.2 L582.5,284.5 L583.8,283.8 L585.0,284.1 L586.2,282.9 L587.5,283.6 L588.8,284.5 L590.0,284.1 L591.2,283.6 L592.5,282.8 L593.8,283.1 L595.0,284.3 L596.2,283.0 L597.5,283.8 L598.8,283.6 L600.0,284.3 L601.2,284.1 L602.5,282.8 L603.8,282.1 L605.0,282.7 L606.2,283.1 L607.5,283.5 L608.8,284.1 L610.0,284.3 L611.2,282.2 L612.5,284.1 L613.8,284.1 L615.0,284.2 L616.2,283.5 L617.5,282.7 L618.8,284.2 L620.0,284.1 L621.2,283.8 L622.5,284.3 L623.8,282.9 L625.0,282.3 L626.2,283.4 L627.5,284.0 L628.8,282.6 L630.0,283.9 L631.2,284.4 L632.5,282.6 L633.8,283.6 L635.0,283.7 L636.2,283.2 L637.5,282.6 L638.8,282.7 L640.0,283.9 L641.2,284.0 L642.5,283.2 L643.8,282.3 L645.0,284.1 L646.2,284.0 L647.5,282.6 L648.8,283.5 L650.0,284.3 L651.2,284.3 L652.5,283.4 L653.8,283.2 L655.0,283.5 L656.2,282.5 L657.5,282.5 L658.8,282.5 L660.0,283.8 L661.2,283.0 L662.5,283.5 L663.8,283.1 L665.0,283.3 L666.2,282.4 L667.5,282.2 L668.8,284.5 L670.0,283.0 L671.2,282.3 L672.5,283.6 L673.8,284.0 L675.0,282.4 L676.2,283.5 L677.5,282.9 L678.8,283.3 L680.0,282.1 L681.2,282.1 L682.5,284.5 L683.8,284.2 L685.0,283.3 L686.2,283.5 L687.5,282.7 L688.8,284.0 L690.0,283.1 L691.2,284.4 L692.5,284.0 L693.8,284.1 L695.0,284.5 L696.2,282.7 L697.5,282.1 L698.8,282.6 L700.0,282.5 L701.2,282.3 L702.5,282.2 L703.8,283.4 L705.0,284.2 L706.2,283.2 L707.5,284.4 L708.8,284.3 L710.0,282.2 L711.2,283.5 L712.5,283.0 L713.8,282.3 L715.0,284.4 L716.2,282.7 L717.5,283.5 L718.8,283.7 L720.0,284.4 L721.2,283.7 L722.5,283.0 L723.8,283.2 L725.0,282.4 L726.2,284.5 L727.5,284.5 L728.8,282.6 L730.0,282.1 L731.2,282.7 L732.5,282.9 L733.8,284.3 L735.0,284.3 L736.2,284.1 L737.5,282.2 L738.8,284.0 L740.0,283.8 L741.2,283.7 L742.5,284.5 L743.8,282.2 L745.0,282.4 L746.2,283.9 L747.5,284.4 L748.8,283.7 L750.0,282.8 L751.2,283.5 L752.5,283.9 L753.8,282.3 L755.0,282.9 L756.2,282.7 L757.5,282.4 L758.8,283.3 L760.0,282.5 L761.2,282.6 L762.5,282.4 L763.8,283.7 L765.0,282.1 L766.2,283.8 L767.5,282.5 L768.8,282.1 L770.0,284.4 L771.2,282.6 L772.5,284.4 L773.8,284.2 L775.0,284.3 L776.2,282.4 L777.5,283.2 L778.8,282.3 L780.0,284.4 L781.2,284.2 L782.5,283.6 L783.8,283.2 L785.0,282.9 L786.2,284.1 L787.5,283.2 L788.8,283.6 L789.5,283.3" fill="none" stroke="#16167e" stroke-width="1.35" stroke-linejoin="round"/>
<path d="M17.5,282.4 L18.8,282.6 L20.0,282.2 L21.2,283.8 L22.5,283.4 L23.8,282.4 L25.0,284.2 L26.2,282.7 L27.5,283.1 L28.8,282.4 L30.0,282.7 L31.2,284.1 L32.5,282.9 L33.8,282.5 L35.0,283.3 L36.2,282.8 L37.5,284.3 L38.8,282.3 L40.0,284.5 L41.2,282.2 L42.5,284.3 L43.8,283.7 L45.0,282.6 L46.2,283.2 L47.5,282.8 L48.8,282.7 L50.0,282.6 L51.2,283.0 L52.5,284.5 L53.8,284.5 L55.0,284.4 L56.2,282.3 L57.5,282.8 L58.8,284.3 L60.0,282.2 L61.2,283.9 L62.5,282.8 L63.8,284.5 L65.0,282.1 L66.2,284.1 L67.5,282.9 L68.8,282.4 L70.0,282.1 L71.2,284.1 L72.5,283.4 L73.8,282.5 L75.0,283.1 L76.2,284.3 L77.5,282.6 L78.8,283.5 L80.0,282.4 L81.2,282.5 L82.5,284.0 L83.8,283.8 L85.0,282.5 L86.2,282.2 L87.5,282.3 L88.8,283.6 L90.0,283.3 L91.2,282.7 L92.5,282.6 L93.8,283.6 L95.0,283.8 L96.2,284.1 L97.5,283.5 L98.8,282.6 L100.0,282.2 L101.2,283.9 L102.5,283.1 L103.8,283.9 L105.0,282.2 L106.2,284.1 L107.5,282.9 L108.8,284.2 L110.0,284.2 L111.2,283.3 L112.5,282.1 L113.8,284.3 L115.0,283.2 L116.2,284.2 L117.5,282.7 L118.8,282.5 L120.0,284.1 L121.2,283.0 L122.5,282.5 L123.8,283.0 L125.0,283.5 L126.2,282.1 L127.5,283.3 L128.8,283.2 L130.0,283.3 L131.2,282.4 L132.5,283.8 L133.8,284.1 L135.0,284.2 L136.2,282.9 L137.5,283.8 L138.8,283.0 L140.0,283.9 L141.2,282.2 L142.5,284.2 L143.8,284.4 L145.0,283.3 L146.2,283.3 L147.5,283.4 L148.8,283.4 L150.0,282.1 L151.2,284.5 L152.5,282.6 L153.8,282.5 L155.0,282.3 L156.2,282.7 L157.5,284.1 L158.8,282.1 L160.0,282.3 L161.2,283.8 L162.5,282.5 L163.8,282.1 L165.0,283.5 L166.2,283.5 L167.5,283.4 L168.8,283.8 L170.0,282.3 L171.2,284.2 L172.5,283.8 L173.8,282.2 L175.0,282.4 L176.2,283.3 L177.5,283.3 L178.8,282.7 L180.0,282.4 L181.2,283.1 L182.5,282.4 L183.8,283.5 L185.0,284.2 L186.2,282.4 L187.5,283.5 L188.8,283.9 L190.0,282.5 L191.2,284.1 L192.5,284.4 L193.8,283.0 L195.0,283.1 L196.2,284.1 L197.5,283.4 L198.8,283.0 L200.0,284.4 L201.2,284.0 L202.5,282.9 L203.8,282.7 L205.0,282.9 L206.2,283.1 L207.5,284.5 L208.8,284.1 L210.0,284.3 L211.2,284.1 L212.5,284.2 L213.8,282.2 L215.0,283.3 L216.2,284.4 L217.5,284.4 L218.8,282.7 L220.0,283.1 L221.2,283.6 L222.5,283.0 L223.8,283.4 L225.0,282.2 L226.2,283.1 L227.5,283.3 L228.8,282.1 L230.0,282.4 L231.2,284.5 L232.5,284.0 L233.8,284.4 L235.0,283.6 L236.2,284.1 L237.5,284.3 L238.8,284.3 L240.0,282.1 L241.2,283.7 L242.5,282.7 L243.8,283.7 L245.0,282.7 L246.2,283.4 L247.5,284.4 L248.8,283.6 L250.0,282.7 L251.2,283.4 L252.5,283.1 L253.8,284.4 L255.0,282.8 L256.2,282.8 L257.5,283.7 L258.8,282.4 L260.0,283.5 L261.2,284.4 L262.5,283.3 L263.8,282.7 L265.0,283.2 L266.2,283.4 L267.5,282.4 L268.8,282.4 L270.0,282.4 L271.2,282.8 L272.5,283.1 L273.8,282.8 L275.0,282.7 L276.2,282.3 L277.5,283.4 L278.8,284.1 L280.0,283.6 L281.2,283.5 L282.5,283.7 L283.8,282.6 L285.0,283.8 L286.2,283.2 L287.5,283.4 L288.8,283.6 L290.0,283.2 L291.2,282.8 L292.5,282.7 L293.8,282.6 L295.0,283.3 L295.5,283.3 L296.3,282.0 L296.6,222.0 L297.5,218.5 L299.5,216.2 L303.0,215.2 L308.0,214.3 L309.2,214.8 L310.5,213.4 L311.8,214.2 L313.0,215.5 L314.2,213.9 L315.5,214.7 L316.8,214.6 L318.0,214.1 L319.2,215.8 L320.5,214.1 L321.8,215.3 L323.0,213.7 L324.2,213.5 L325.5,215.5 L326.8,214.4 L328.0,213.5 L329.2,214.3 L330.5,214.4 L331.8,215.2 L333.0,213.6 L334.2,213.9 L335.5,215.7 L336.8,215.2 L338.0,213.7 L339.2,214.2 L340.5,214.2 L341.8,215.0 L343.0,214.9 L344.2,215.5 L345.5,215.4 L346.8,214.6 L348.0,215.2 L349.2,215.2 L350.5,215.2 L351.8,214.5 L353.0,215.3 L354.2,215.1 L354.5,214.6 L355.3,216.0 L356.5,250.0 L357.3,278.0 L358.5,281.5 L361.0,283.0 L365.0,284.3 L366.2,282.4 L367.5,284.2 L368.8,282.1 L370.0,284.0 L371.2,283.5 L372.5,283.3 L373.8,284.5 L375.0,283.5 L376.2,283.1 L377.5,284.0 L378.8,284.2 L380.0,283.6 L381.2,283.0 L382.5,283.2 L383.8,283.2 L385.0,283.9 L386.2,282.8 L387.5,283.0 L388.8,283.4 L390.0,283.0 L391.2,282.9 L392.5,284.0 L393.8,284.2 L395.0,283.3 L396.2,283.2 L397.5,282.5 L398.8,282.8 L400.0,282.4 L401.2,283.5 L402.5,283.5 L403.8,282.3 L405.0,284.4 L406.2,282.9 L407.5,284.2 L408.8,284.1 L410.0,284.4 L411.2,282.6 L412.5,283.1 L413.8,284.3 L415.0,282.1 L416.2,282.2 L417.5,283.5 L418.8,283.3 L420.0,284.4 L421.2,284.0 L422.5,283.4 L423.8,284.5 L425.0,283.3 L426.2,283.3 L427.5,283.8 L428.8,283.0 L430.0,282.9 L431.2,283.5 L432.5,282.9 L433.8,284.4 L435.0,283.7 L436.2,283.4 L437.5,282.3 L438.8,283.0 L440.0,283.1 L441.2,283.5 L442.5,283.5 L443.8,284.2 L445.0,284.5 L446.2,283.3 L447.5,283.2 L448.8,283.6 L450.0,284.5 L451.2,282.9 L452.5,283.4 L453.8,284.1 L455.0,282.5 L456.2,282.8 L457.5,284.5 L458.8,284.1 L460.0,283.3 L461.2,282.3 L462.5,284.3 L463.8,283.8 L465.0,284.1 L466.2,284.5 L467.5,284.3 L468.8,283.1 L470.0,282.4 L471.2,282.8 L472.5,283.3 L473.8,283.3 L475.0,282.5 L476.2,282.5 L477.5,283.6 L478.8,283.6 L480.0,282.9 L481.2,284.5 L482.5,283.6 L483.8,282.2 L485.0,283.1 L486.2,284.0 L487.5,282.8 L488.8,283.8 L490.0,282.1 L491.2,282.8 L492.5,284.2 L493.8,283.5 L495.0,283.7 L496.2,282.5 L497.5,283.3 L498.8,283.4 L500.0,282.7 L501.2,283.7 L502.5,283.4 L503.8,284.5 L505.0,283.5 L506.2,283.1 L507.5,282.4 L508.8,282.4 L510.0,283.9 L511.2,282.3 L512.5,282.3 L513.8,282.5 L515.0,283.4 L516.2,284.1 L517.5,283.6 L518.8,284.1 L520.0,282.2 L521.2,282.1 L522.5,284.0 L523.8,282.9 L525.0,283.8 L526.2,282.9 L527.5,282.5 L528.8,282.7 L530.0,282.3 L531.2,284.3 L532.5,283.5 L533.8,282.9 L535.0,283.2 L536.2,283.0 L537.5,282.2 L538.8,284.3 L540.0,283.5 L541.2,284.4 L542.5,283.1 L543.8,283.6 L545.0,282.7 L546.2,282.2 L547.5,284.4 L548.8,284.2 L550.0,282.8 L551.2,284.3 L552.5,284.1 L553.8,282.8 L555.0,283.6 L556.2,284.5 L557.5,283.3 L558.8,284.4 L560.0,282.7 L561.2,283.0 L562.5,283.8 L563.8,282.6 L565.0,282.8 L566.2,284.2 L567.5,283.3 L568.8,284.0 L570.0,282.7 L571.2,282.5 L572.5,282.9 L573.8,282.5 L575.0,284.5 L576.2,282.8 L577.5,283.5 L578.8,282.3 L580.0,283.4 L581.2,283.0 L582.5,283.1 L583.8,282.2 L585.0,282.4 L586.2,284.1 L587.5,282.9 L588.8,282.7 L590.0,282.5 L591.2,282.8 L592.5,282.6 L593.8,282.1 L595.0,283.7 L596.2,282.9 L597.5,282.4 L598.8,283.8 L600.0,282.3 L601.2,282.7 L602.5,284.1 L603.8,282.4 L605.0,283.2 L606.2,284.1 L607.5,284.1 L608.8,282.4 L610.0,282.9 L611.2,283.9 L612.5,283.0 L613.8,284.4 L615.0,282.6 L616.2,284.4 L617.5,283.3 L618.8,282.6 L620.0,283.2 L621.2,282.4 L622.5,283.8 L623.8,282.7 L625.0,284.3 L626.2,283.5 L627.5,283.0 L628.8,282.7 L630.0,283.6 L631.2,282.6 L632.5,284.2 L633.8,282.4 L635.0,283.3 L636.2,283.4 L637.5,282.7 L638.8,284.0 L640.0,283.0 L641.2,283.7 L642.5,283.5 L643.8,282.8 L645.0,283.0 L646.2,282.3 L647.5,282.5 L648.8,284.2 L650.0,282.9 L651.2,283.7 L652.5,282.3 L653.8,283.5 L655.0,283.0 L656.2,283.3 L657.5,282.8 L658.8,282.2 L660.0,282.8 L661.2,282.6 L662.5,282.4 L663.8,283.8 L665.0,282.8 L666.2,283.1 L667.5,284.3 L668.8,284.0 L670.0,284.3 L671.2,284.2 L672.5,282.4 L673.8,282.7 L675.0,282.1 L676.2,283.7 L677.5,283.7 L678.8,282.9 L680.0,283.1 L681.2,283.7 L682.5,283.8 L683.8,282.7 L685.0,284.2 L686.2,282.9 L687.5,283.6 L688.8,282.5 L690.0,282.3 L691.2,284.3 L692.5,283.9 L693.8,283.8 L695.0,282.2 L696.2,282.1 L697.5,282.5 L698.8,282.5 L700.0,282.8 L701.2,283.0 L702.5,282.1 L703.8,282.8 L705.0,283.6 L706.2,282.5 L707.5,284.1 L708.8,283.5 L710.0,283.8 L711.2,282.7 L712.5,283.1 L713.8,283.8 L715.0,282.9 L716.2,282.1 L717.5,284.1 L718.8,284.0 L720.0,282.8 L721.2,282.2 L722.5,284.2 L723.8,283.6 L725.0,282.2 L726.2,282.7 L727.5,282.3 L728.8,284.0 L730.0,282.6 L731.2,284.3 L732.5,283.9 L733.8,282.3 L735.0,283.8 L736.2,283.0 L737.5,283.9 L738.8,284.1 L740.0,282.8 L741.2,282.3 L742.5,284.4 L743.8,283.1 L745.0,284.4 L746.2,283.8 L747.5,283.9 L748.8,284.1 L750.0,283.6 L751.2,283.2 L752.5,282.2 L753.8,283.8 L755.0,283.1 L756.2,283.3 L757.5,284.4 L758.8,282.4 L760.0,284.0 L761.2,282.2 L762.5,283.8 L763.8,284.1 L765.0,282.7 L766.2,283.4 L767.5,284.5 L768.8,283.6 L770.0,283.4 L771.2,282.7 L772.5,282.2 L773.8,282.9 L775.0,283.1 L776.2,282.6 L777.5,282.8 L778.8,282.4 L780.0,283.8 L781.2,283.7 L782.5,282.6 L783.8,282.7 L785.0,283.3 L786.2,283.2 L787.5,284.4 L788.8,282.9 L789.5,283.3" fill="none" stroke="#16167e" stroke-width="1.35" stroke-linejoin="round"/>
<text x="6" y="145.5" font-size="8.5" fill="#2e1c36" textLength="10.2" lengthAdjust="spacingAndGlyphs">C2</text>
<rect x="7" y="148.7" width="11" height="1.3" fill="#8a1c62"/>
<text x="6" y="276.8" font-size="8.5" fill="#0c0c14" textLength="10.2" lengthAdjust="spacingAndGlyphs">C3</text>
<path d="M7.6,282.6 V281.1 H17.5" fill="none" stroke="#12125c" stroke-width="1.7"/>
<path d="M423.7,170 L427.6,178.2 L419.8,178.2 Z" fill="#b3207a"/>
<path d="M423.7,315.2 L427.6,323 L419.8,323 Z" fill="#16167e"/>
<path d="M790.2,143.3 L798,139.8 L798,146.9 Z" fill="#b3207a"/>
<defs><linearGradient id="gd" x1="0" y1="0" x2="0" y2="1"><stop offset="0" stop-color="#6a5ea6"/><stop offset="1" stop-color="#7269ad"/></linearGradient></defs>
<rect x="4.5" y="325.5" width="96.5" height="42.5" rx="3.5" fill="#4c4088"/>
<rect x="5.5" y="326.5" width="94.5" height="40.5" rx="3" fill="url(#gd)"/>
<path d="M5.5,329.5 a3,3 0 0 1 3,-3 H97 a3,3 0 0 1 3,3 V339 H5.5 Z" fill="#f20c7c"/>
<text x="7" y="336.2" font-size="9.5" fill="#c40c5c" textLength="11.6" lengthAdjust="spacingAndGlyphs">C2</text>
<rect x="76" y="328.5" width="22.5" height="9" rx="1.5" fill="#3a0826"/>
<text x="87.3" y="336.6" font-size="9" fill="#e04090" text-anchor="middle" textLength="20.5" lengthAdjust="spacingAndGlyphs">DC50</text>
<text x="98.5" y="350.5" font-size="11" fill="#fff" text-anchor="end" textLength="53.5" lengthAdjust="spacingAndGlyphs">500 mV/div</text>
<text x="98.5" y="363.5" font-size="11" fill="#fff" text-anchor="end" textLength="74" lengthAdjust="spacingAndGlyphs">-1.401 V offset</text>
<rect x="105" y="325.5" width="96" height="42.5" rx="3.5" fill="#4c4088"/>
<rect x="106" y="326.5" width="94" height="40.5" rx="3" fill="url(#gd)"/>
<path d="M106,329.5 a3,3 0 0 1 3,-3 H197 a3,3 0 0 1 3,3 V339 H106 Z" fill="#0a0ae8"/>
<text x="107.5" y="336.2" font-size="9.5" fill="#1c1cbc" textLength="11.6" lengthAdjust="spacingAndGlyphs">C3</text>
<rect x="176" y="328.5" width="22.5" height="9" rx="1.5" fill="#06063a"/>
<text x="187.3" y="336.6" font-size="9" fill="#2828a0" text-anchor="middle" textLength="20.5" lengthAdjust="spacingAndGlyphs">DC50</text>
<text x="198.5" y="350.5" font-size="11" fill="#fff" text-anchor="end" textLength="53.5" lengthAdjust="spacingAndGlyphs">500 mV/div</text>
<text x="198.5" y="363.5" font-size="11" fill="#fff" text-anchor="end" textLength="74" lengthAdjust="spacingAndGlyphs">-1.001 V offset</text>
<rect x="583.5" y="325.5" width="111.0" height="42.5" rx="3.5" fill="#4c4088"/>
<rect x="584.5" y="326.5" width="109.0" height="40.5" rx="3" fill="url(#gd)"/>
<path d="M584.5,329.5 a3,3 0 0 1 3,-3 H690.5 a3,3 0 0 1 3,3 V339 H584.5 Z" fill="#d6d6de"/>
<text x="586" y="337" font-size="11" fill="#000" textLength="45" lengthAdjust="spacingAndGlyphs">Timebase</text>
<text x="692.6" y="337" font-size="11" fill="#000" text-anchor="end" textLength="26" lengthAdjust="spacingAndGlyphs">26 ns</text>
<text x="692.6" y="350.5" font-size="11" fill="#fff" text-anchor="end" textLength="50" lengthAdjust="spacingAndGlyphs">100 ns/div</text>
<text x="586" y="363.5" font-size="11" fill="#fff" textLength="35" lengthAdjust="spacingAndGlyphs">20.0 kS</text>
<text x="692.6" y="363.5" font-size="11" fill="#fff" text-anchor="end" textLength="38.5" lengthAdjust="spacingAndGlyphs">20 GS/s</text>
<rect x="698.5" y="325.5" width="96.0" height="42.5" rx="3.5" fill="#4c4088"/>
<rect x="699.5" y="326.5" width="94.0" height="40.5" rx="3" fill="url(#gd)"/>
<path d="M699.5,329.5 a3,3 0 0 1 3,-3 H790.5 a3,3 0 0 1 3,3 V339 H699.5 Z" fill="#d6d6de"/>
<text x="701" y="337" font-size="11" fill="#000" textLength="33.5" lengthAdjust="spacingAndGlyphs">Trigger</text>
<rect x="779" y="328.5" width="13" height="9" rx="2" fill="#000"/>
<text x="785.5" y="336.3" font-size="8.5" fill="#fff" text-anchor="middle" textLength="10.5" lengthAdjust="spacingAndGlyphs" font-weight="bold">C2</text>
<text x="701" y="350.5" font-size="11" fill="#fff" textLength="22.5" lengthAdjust="spacingAndGlyphs">Auto</text>
<text x="792.4" y="350.5" font-size="11" fill="#fff" text-anchor="end" textLength="37" lengthAdjust="spacingAndGlyphs">200 mV</text>
<text x="701" y="363.5" font-size="11" fill="#fff" textLength="34" lengthAdjust="spacingAndGlyphs">Qualify</text>
<text x="792.4" y="363.5" font-size="11" fill="#fff" text-anchor="end" textLength="38" lengthAdjust="spacingAndGlyphs">Positive</text>
<rect x="0" y="368.5" width="800" height="231.5" fill="#000"/>
<path d="M4,577.5 V378 a3.5,3.5 0 0 1 3.5,-3.5 H61.5 a3.5,3.5 0 0 1 3.5,3.5 V405 H796 V577.5 Z" fill="#9d94cc"/>
<path d="M5,577.5 V378.5 a3,3 0 0 1 3,-3 H61 a3,3 0 0 1 3,3 V406 H796 V577.5 Z" fill="#413277"/>
<text x="17.7" y="393.5" font-size="10.5" fill="#fff" textLength="32.8" lengthAdjust="spacingAndGlyphs">Trigger</text>
<rect x="4" y="379" width="1" height="198.5" fill="#c4bee6"/>
<rect x="156" y="406" width="1" height="162" fill="#8d84bf"/>
<rect x="752.5" y="372.5" width="43.5" height="29.5" rx="3.5" fill="#5a4f9a"/>
<rect x="752.5" y="372.5" width="42.7" height="28.7" rx="3.5" fill="#8b80c0"/>
<rect x="753.5" y="373.5" width="41.7" height="27.7" rx="3.0" fill="#6e63a9"/>
<text x="774.5" y="392" font-size="12" fill="#fff" text-anchor="middle" textLength="31.5" lengthAdjust="spacingAndGlyphs">Close</text>
<rect x="14" y="425" width="41" height="34" rx="3" fill="#5a4f9a"/>
<rect x="14" y="425" width="40.2" height="33.2" rx="3" fill="#8b80c0"/>
<rect x="15" y="426" width="39.2" height="32.2" rx="2.5" fill="#6e63a9"/>
<text x="34.5" y="421" font-size="11.5" fill="#fff" text-anchor="middle" textLength="27.3" lengthAdjust="spacingAndGlyphs">Edge</text>
<rect x="60" y="425" width="41" height="34" rx="3" fill="#5a4f9a"/>
<rect x="60" y="425" width="40.2" height="33.2" rx="3" fill="#8b80c0"/>
<rect x="61" y="426" width="39.2" height="32.2" rx="2.5" fill="#6e63a9"/>
<text x="80.5" y="421" font-size="11.5" fill="#fff" text-anchor="middle" textLength="30.5" lengthAdjust="spacingAndGlyphs">Width</text>
<rect x="106" y="425" width="41" height="34" rx="3" fill="#5a4f9a"/>
<rect x="106" y="425" width="40.2" height="33.2" rx="3" fill="#8b80c0"/>
<rect x="107" y="426" width="39.2" height="32.2" rx="2.5" fill="#6e63a9"/>
<text x="126.5" y="421" font-size="11.5" fill="#fff" text-anchor="middle" textLength="30" lengthAdjust="spacingAndGlyphs">Glitch</text>
<rect x="14" y="479.2" width="41" height="34.00000000000006" rx="3" fill="#5a4f9a"/>
<rect x="14" y="479.2" width="40.2" height="33.20000000000006" rx="3" fill="#8b80c0"/>
<rect x="15" y="480.2" width="39.2" height="32.20000000000006" rx="2.5" fill="#6e63a9"/>
<text x="34.5" y="475.5" font-size="11.5" fill="#fff" text-anchor="middle" textLength="37.5" lengthAdjust="spacingAndGlyphs">Interval</text>
<rect x="60" y="479.2" width="41" height="34.00000000000006" rx="3" fill="#8a68a8"/>
<rect x="61" y="480.2" width="40.6" height="33.60000000000006" rx="3" fill="#e4ccf0"/>
<rect x="61" y="480.2" width="39.8" height="32.800000000000054" rx="2.5" fill="#c79fdb"/>
<text x="80.5" y="475.5" font-size="11.5" fill="#fff" text-anchor="middle" textLength="36" lengthAdjust="spacingAndGlyphs">Qualify</text>
<rect x="106" y="479.2" width="41" height="34.00000000000006" rx="3" fill="#5a4f9a"/>
<rect x="106" y="479.2" width="40.2" height="33.20000000000006" rx="3" fill="#8b80c0"/>
<rect x="107" y="480.2" width="39.2" height="32.20000000000006" rx="2.5" fill="#6e63a9"/>
<text x="126.5" y="475.5" font-size="11.5" fill="#fff" text-anchor="middle" textLength="26.5" lengthAdjust="spacingAndGlyphs">State</text>
<rect x="14" y="533.3" width="41" height="34.0" rx="3" fill="#5a4f9a"/>
<rect x="14" y="533.3" width="40.2" height="33.2" rx="3" fill="#8b80c0"/>
<rect x="15" y="534.3" width="39.2" height="32.2" rx="2.5" fill="#6e63a9"/>
<text x="34.5" y="529.5" font-size="11.5" fill="#fff" text-anchor="middle" textLength="43.6" lengthAdjust="spacingAndGlyphs">Dropout</text>
<rect x="60" y="533.3" width="41" height="34.0" rx="3" fill="#5a4f9a"/>
<rect x="60" y="533.3" width="40.2" height="33.2" rx="3" fill="#8b80c0"/>
<rect x="61" y="534.3" width="39.2" height="32.2" rx="2.5" fill="#6e63a9"/>
<text x="80.5" y="529.5" font-size="11.5" fill="#fff" text-anchor="middle" textLength="28.7" lengthAdjust="spacingAndGlyphs">Logic</text>
<path d="M18.2,452.5 H25.3" fill="none" stroke="#0a0820" stroke-width="1.25"/>
<path d="M25.3,452.5 H32.4 L37.4,431.5 H44" fill="none" stroke="#f4e6b8" stroke-width="1.4"/>
<path d="M44,431.5 H50.8" fill="none" stroke="#0a0820" stroke-width="1.25"/>
<path d="M65.2,452.5 H70.5 V431.5 H91.5 V452.5 H96.8" fill="none" stroke="#0a0820" stroke-width="1.25"/>
<path d="M70.5,430.8 V453 M91.5,430.8 V453" fill="none" stroke="#f4e6b8" stroke-width="1.5"/>
<path d="M72,444.5 H89.5" fill="none" stroke="#f2dc70" stroke-width="1.2"/>
<path d="M70.8,444.5 L75.5,441.5 V447.5 Z M90.7,444.5 L86,441.5 V447.5 Z" fill="#f2dc70"/>
<path d="M111.3,452.5 H119.6 V431.5 H129.6 V452.5 H132.8" fill="none" stroke="#0a0820" stroke-width="1.25"/>
<rect x="133" y="432" width="3.4" height="20" fill="#84699a"/>
<path d="M132.9,453 V431.6 H136.6 V453" fill="none" stroke="#f4e6b8" stroke-width="1.2"/>
<path d="M137.2,452.5 H142.8" fill="none" stroke="#0a0820" stroke-width="1.25"/>
<path d="M19.3,506.5 H24.5 V484.5 H35.5 V506.5 H45.5 V484.5 H50.8" fill="none" stroke="#0a0820" stroke-width="1.25"/>
<path d="M24.5,483.8 V507 M45.5,483.8 V507" fill="none" stroke="#f4e6b8" stroke-width="1.5"/>
<path d="M26,499 H43.5" fill="none" stroke="#f2dc70" stroke-width="1.2"/>
<path d="M24.8,499 L29.5,496 V502 Z M44.7,499 L40,496 V502 Z" fill="#f2dc70"/>
<path d="M65,494.5 H75.5 V484.5 H83.5 V494.5 H91.5" fill="none" stroke="#efc98c" stroke-width="1.2"/>
<path d="M66,509.5 H75.5 V499.5 H83.5 V509.5 H91.5" fill="none" stroke="#0a0820" stroke-width="1.25"/>
<path d="M92.3,490.8 C98,491.5 98.5,502.5 92,504.3" fill="none" stroke="#0a0820" stroke-width="1.1"/>
<path d="M89.3,504.3 L93.3,501.6 V507 Z" fill="#0a0820"/>
<path d="M117,487.0 H126.5 A4.5,4.5 0 0 1 126.5,496.0 H117 Z" fill="#f2d24a" stroke="#0a0820" stroke-width="1.2"/>
<path d="M118.5,488.5 H126.5" stroke="#fff6c0" stroke-width="1" fill="none"/>
<rect x="113" y="487.7" width="3" height="1" fill="#ddd8f0"/>
<rect x="113" y="489.9" width="3" height="1" fill="#ddd8f0"/>
<rect x="113" y="492.09999999999997" width="3" height="1" fill="#ddd8f0"/>
<rect x="113" y="494.3" width="3" height="1" fill="#ddd8f0"/>
<path d="M131,491.5 H138" fill="none" stroke="#0a0820" stroke-width="1.3"/>
<rect x="138" y="481.5" width="3.6" height="29" fill="#b4b4b8" stroke="#0a0820" stroke-width="1"/>
<path d="M123,504.5 H134" fill="none" stroke="#f6e860" stroke-width="1.3"/>
<path d="M137,504.5 L132.5,501.5 V507.5 Z" fill="#f6e860"/>
<rect x="112.5" y="503.5" width="2" height="2" fill="#e8e4f8"/><rect x="116" y="502" width="1.2" height="4" fill="#e8e4f8"/><rect x="118.6" y="502" width="1.2" height="4" fill="#e8e4f8"/>
<path d="M19,560.5 H28.5 V539.5 H42 V560.5 H45" fill="none" stroke="#0a0820" stroke-width="1.25"/>
<path d="M44.6,560.8 H51.4" fill="none" stroke="#f0e69a" stroke-width="1.7"/>
<path d="M71,544.5 H81.5 A5.0,5.0 0 0 1 81.5,554.5 H71 Z" fill="#f2d24a" stroke="#0a0820" stroke-width="1.2"/>
<path d="M72.5,546.0 H81.5" stroke="#fff6c0" stroke-width="1" fill="none"/>
<rect x="67" y="545.2" width="3" height="1" fill="#ddd8f0"/>
<rect x="67" y="547.7333333333333" width="3" height="1" fill="#ddd8f0"/>
<rect x="67" y="550.2666666666668" width="3" height="1" fill="#ddd8f0"/>
<rect x="67" y="552.8000000000001" width="3" height="1" fill="#ddd8f0"/>
<path d="M86.5,549.5 H95.5" fill="none" stroke="#0a0820" stroke-width="1.3"/>
<text x="219" y="425.5" font-size="11.5" fill="#fff" text-anchor="middle" textLength="57" lengthAdjust="spacingAndGlyphs">Trigger On</text>
<rect x="170.5" y="428.5" width="98.0" height="21.0" rx="3" fill="#7469b0"/>
<rect x="170.5" y="428.5" width="97.0" height="20.0" rx="3" fill="#1c1446"/>
<rect x="171.5" y="429.5" width="96.0" height="19.0" rx="2.5" fill="#2a2158"/>
<text x="176.5" y="442.7" font-size="11" fill="#fff" textLength="14" lengthAdjust="spacingAndGlyphs">C2</text>
<text x="219" y="485" font-size="11.5" fill="#857cb0" text-anchor="middle" textLength="48.5" lengthAdjust="spacingAndGlyphs">Coupling</text>
<rect x="171.0" y="488.5" width="97.0" height="19.5" rx="2.5" fill="#413277" stroke="#6459a0" stroke-width="1"/>
<text x="176.5" y="502" font-size="11" fill="#7d74a8" textLength="14.5" lengthAdjust="spacingAndGlyphs">DC</text>
<text x="219" y="542.5" font-size="11.5" fill="#fff" text-anchor="middle" textLength="28" lengthAdjust="spacingAndGlyphs">Level</text>
<rect x="170.5" y="545.5" width="98.0" height="20.5" rx="3" fill="#7469b0"/>
<rect x="170.5" y="545.5" width="97.0" height="19.5" rx="3" fill="#1c1446"/>
<rect x="171.5" y="546.5" width="96.0" height="18.5" rx="2.5" fill="#2a2158"/>
<text x="176.5" y="559.6" font-size="11" fill="#fff" textLength="41" lengthAdjust="spacingAndGlyphs">200 mV</text>
<text x="308.5" y="424.5" font-size="11.5" fill="#fff" text-anchor="middle" textLength="42" lengthAdjust="spacingAndGlyphs">Positive</text>
<rect x="286.6" y="428.2" width="43.19999999999999" height="34.60000000000002" rx="3" fill="#8a68a8"/>
<rect x="287.6" y="429.2" width="42.79999999999999" height="34.200000000000024" rx="3" fill="#e4ccf0"/>
<rect x="287.6" y="429.2" width="41.999999999999986" height="33.40000000000002" rx="2.5" fill="#c79fdb"/>
<path d="M294,457.5 H308 L312,436.5 H325.5" fill="none" stroke="#0a0820" stroke-width="1.25"/>
<rect x="307.7" y="444.3" width="4.8" height="4.8" fill="#f2d68e"/>
<path d="M310,459.3 L312.8,462.3 H307.2 Z" fill="#fff"/>
<text x="308.5" y="481.5" font-size="11.5" fill="#fff" text-anchor="middle" textLength="45.5" lengthAdjust="spacingAndGlyphs">Negative</text>
<rect x="287.5" y="485.5" width="43.0" height="34.5" rx="3" fill="#5a4f9a"/>
<rect x="287.5" y="485.5" width="42.2" height="33.7" rx="3" fill="#8b80c0"/>
<rect x="288.5" y="486.5" width="41.2" height="32.7" rx="2.5" fill="#6e63a9"/>
<path d="M293,492.5 H306 L311.5,513.5 H325" fill="none" stroke="#0a0820" stroke-width="1.25"/>
<rect x="306.5" y="500.7" width="4.8" height="4.8" fill="#f2d68e"/>
<path d="M309.6,514.6 L312.4,517.6 H306.8 Z" fill="#fff"/>
<rect x="274.5" y="531" width="58.5" height="35" rx="3.5" fill="#5a4f9a"/>
<rect x="274.5" y="531" width="57.7" height="34.2" rx="3.5" fill="#8b80c0"/>
<rect x="275.5" y="532" width="56.7" height="33.2" rx="3.0" fill="#6e63a9"/>
<text x="303.2" y="545.5" font-size="11.5" fill="#fff" text-anchor="middle" textLength="24.3" lengthAdjust="spacingAndGlyphs">Zero</text>
<text x="303.4" y="560.5" font-size="11.5" fill="#fff" text-anchor="middle" textLength="28" lengthAdjust="spacingAndGlyphs">Level</text>
<text x="399.2" y="425.5" font-size="11.5" fill="#fff" text-anchor="middle" textLength="73.5" lengthAdjust="spacingAndGlyphs">After Qualifier</text>
<rect x="350" y="428.5" width="98.5" height="21.0" rx="3" fill="#7469b0"/>
<rect x="350" y="428.5" width="97.5" height="20.0" rx="3" fill="#1c1446"/>
<rect x="351" y="429.5" width="96.5" height="19.0" rx="2.5" fill="#2a2158"/>
<text x="356.5" y="442.7" font-size="11" fill="#fff" textLength="14" lengthAdjust="spacingAndGlyphs">C3</text>
<text x="399.2" y="464.5" font-size="11.5" fill="#fff" text-anchor="middle" textLength="50.5" lengthAdjust="spacingAndGlyphs">has gone</text>
<rect x="350" y="467.5" width="98.5" height="21.0" rx="3" fill="#7469b0"/>
<rect x="350" y="467.5" width="97.5" height="20.0" rx="3" fill="#1c1446"/>
<rect x="351" y="468.5" width="96.5" height="19.0" rx="2.5" fill="#2a2158"/>
<text x="356" y="481.6" font-size="11" fill="#fff" textLength="32.5" lengthAdjust="spacingAndGlyphs">Above</text>
<rect x="349.5" y="491.5" width="99.5" height="15" rx="1.5" fill="#f8f420"/>
<rect x="349.5" y="500" width="99.5" height="28" rx="3" fill="#a79fd0"/>
<rect x="349.5" y="500" width="3" height="28" rx="1.5" fill="#e4dc9c"/>
<rect x="349.5" y="491.5" width="99.5" height="15" rx="1.5" fill="#f8f420"/>
<rect x="350.5" y="506" width="97.7" height="21" rx="2.5" fill="#2a2158"/>
<rect x="350.5" y="506" width="97.7" height="1.2" fill="#1c1446"/>
<text x="399.6" y="503.3" font-size="11.8" fill="#000" text-anchor="middle" textLength="27.8" lengthAdjust="spacingAndGlyphs">Level</text>
<text x="356.5" y="520.4" font-size="11" fill="#fff" textLength="41" lengthAdjust="spacingAndGlyphs">500 mV</text>
<text x="399.2" y="542" font-size="11.5" fill="#857cb0" text-anchor="middle" textLength="48.5" lengthAdjust="spacingAndGlyphs">Coupling</text>
<rect x="350.5" y="546.0" width="97.5" height="20.0" rx="2.5" fill="#413277" stroke="#6459a0" stroke-width="1"/>
<text x="356.5" y="560" font-size="11" fill="#7d74a8" textLength="14.5" lengthAdjust="spacingAndGlyphs">DC</text>
<text x="464" y="422.5" font-size="11" fill="#f2ee84" textLength="105" lengthAdjust="spacingAndGlyphs">After qualified, wait:</text>
<rect x="477" y="429.2" width="35.200000000000045" height="34.400000000000034" rx="3" fill="#8a68a8"/>
<rect x="478" y="430.2" width="34.80000000000005" height="34.000000000000036" rx="3" fill="#e4ccf0"/>
<rect x="478" y="430.2" width="34.00000000000004" height="33.20000000000003" rx="2.5" fill="#c79fdb"/>
<text x="495.7" y="451.5" font-size="10.5" fill="#fff" text-anchor="middle" textLength="25.5" lengthAdjust="spacingAndGlyphs">None</text>
<rect x="516.5" y="430" width="35.0" height="34.5" rx="3" fill="#5a4f9a"/>
<rect x="516.5" y="430" width="34.2" height="33.7" rx="3" fill="#8b80c0"/>
<rect x="517.5" y="431" width="33.2" height="32.7" rx="2.5" fill="#6e63a9"/>
<rect x="478" y="468.5" width="35" height="34.5" rx="3" fill="#5a4f9a"/>
<rect x="478" y="468.5" width="34.2" height="33.7" rx="3" fill="#8b80c0"/>
<rect x="479" y="469.5" width="33.2" height="32.7" rx="2.5" fill="#6e63a9"/>
<rect x="516.5" y="468.5" width="35.0" height="34.5" rx="3" fill="#5a4f9a"/>
<rect x="516.5" y="468.5" width="34.2" height="33.7" rx="3" fill="#8b80c0"/>
<rect x="517.5" y="469.5" width="33.2" height="32.7" rx="2.5" fill="#6e63a9"/>
<text x="534" y="490" font-size="10" fill="#fff" text-anchor="middle" textLength="30.5" lengthAdjust="spacingAndGlyphs">Events</text>
<circle cx="529.5" cy="435.3" r="3.1" fill="#9494d4" stroke="#0a0820" stroke-width="1.3"/>
<rect x="527.3" y="436.5" width="4.4" height="1.8" fill="#0a0820"/>
<path d="M522.0,438.7 l1.6,-1.6 M537.0,438.7 l-1.6,-1.6" stroke="#0a0820" stroke-width="1.6" fill="none"/>
<ellipse cx="529.5" cy="447.3" rx="10.3" ry="10" fill="#c6c6c6" stroke="#0a0820" stroke-width="1.5"/>
<ellipse cx="529.5" cy="447.3" rx="8.2" ry="8" fill="none" stroke="#dedede" stroke-width="1" stroke-dasharray="1 3.2"/>
<path d="M525.0,442.5 L529.0,447.90000000000003 H534.5" fill="none" stroke="#0a0820" stroke-width="1.2"/>
<path d="M547,432.8 L540,438.3 L547,443.8" fill="none" stroke="#1a1450" stroke-width="1.4"/>
<circle cx="491" cy="474.6" r="3.1" fill="#9494d4" stroke="#0a0820" stroke-width="1.3"/>
<rect x="488.8" y="475.8" width="4.4" height="1.8" fill="#0a0820"/>
<path d="M483.5,478.0 l1.6,-1.6 M498.5,478.0 l-1.6,-1.6" stroke="#0a0820" stroke-width="1.6" fill="none"/>
<ellipse cx="491" cy="486.6" rx="10.3" ry="10" fill="#c6c6c6" stroke="#0a0820" stroke-width="1.5"/>
<ellipse cx="491" cy="486.6" rx="8.2" ry="8" fill="none" stroke="#dedede" stroke-width="1" stroke-dasharray="1 3.2"/>
<path d="M486.5,481.8 L490.5,487.20000000000005 H496" fill="none" stroke="#0a0820" stroke-width="1.2"/>
<path d="M502.6,471.5 L509.6,477.0 L502.6,482.5" fill="none" stroke="#1a1450" stroke-width="1.4"/>
<rect x="467.5" y="537.5" width="102" height="33.5" rx="3" fill="none" stroke="#7e74b6" stroke-width="1"/>
<rect x="471" y="546.5" width="15" height="15" fill="#fff"/>
<text x="565.5" y="550.8" font-size="11.5" fill="#fff" text-anchor="end" textLength="59" lengthAdjust="spacingAndGlyphs">Qualify first</text>
<text x="565.5" y="566" font-size="11.5" fill="#fff" text-anchor="end" textLength="74.3" lengthAdjust="spacingAndGlyphs">segment only</text>
<rect x="617" y="414" width="155" height="77.5" fill="#9088c4"/>
<rect x="617" y="414" width="154" height="76.5" fill="#000"/>
<g shape-rendering="crispEdges" fill="none">
<line x1="652" y1="446.5" x2="666" y2="446.5" stroke="#fff" stroke-width="1"/>
<rect x="665.5" y="431" width="3" height="16" fill="#48d4e4"/>
<line x1="669" y1="431.5" x2="738" y2="431.5" stroke="#fff" stroke-width="1" stroke-dasharray="3 2"/>
<line x1="669" y1="446.5" x2="738" y2="446.5" stroke="#fff" stroke-width="1" stroke-dasharray="3 2"/>
<path d="M652,466.5 H691.5 M694,451.5 H702.5 V466.5 H738" stroke="#fff" stroke-width="1"/>
<rect x="691" y="450" width="3" height="22" fill="#d2307e"/>
</g>
<path d="M692.5,470.5 L696,477 H689 Z" fill="#d2307e"/>
<text x="694.7" y="512.5" font-size="12" fill="#fff" text-anchor="middle" textLength="133.5" lengthAdjust="spacingAndGlyphs">Trigger with edge trigger</text>
<text x="694.7" y="527.5" font-size="12" fill="#fff" text-anchor="middle" textLength="104" lengthAdjust="spacingAndGlyphs">settings only after a</text>
<text x="694.7" y="542.7" font-size="12" fill="#fff" text-anchor="middle" textLength="147.7" lengthAdjust="spacingAndGlyphs">second qualifying condition</text>
<defs><linearGradient id="gs" gradientUnits="userSpaceOnUse" x1="649" y1="0" x2="749" y2="0"><stop offset="0.555" stop-color="#f6c4cc"/><stop offset="0.565" stop-color="#fff"/></linearGradient></defs>
<text x="694.7" y="557.5" font-size="12" fill="url(#gs)" text-anchor="middle" textLength="91" lengthAdjust="spacingAndGlyphs">is satisfied once.</text>
<text x="9.3" y="595" font-size="15" fill="#1a18c2" textLength="52.5" lengthAdjust="spacingAndGlyphs" font-weight="bold">LeCroy</text>
<rect x="7" y="596.6" width="55.5" height="1.4" fill="#1a18c2"/>
<defs><clipPath id="cl"><rect x="640" y="562" width="160" height="40"/></clipPath><clipPath id="cu"><rect x="640" y="540" width="160" height="22"/></clipPath></defs>
<rect x="648" y="562" width="148" height="38" fill="#e8e4ec" opacity="0.36"/>
<rect x="648" y="548.5" width="57" height="14" fill="#a02040" opacity="0.3"/>
<rect x="650" y="566" width="92" height="22" fill="#a01220" opacity="0.66"/>
<rect x="743" y="562" width="53" height="16" fill="#2c5cb0" opacity="0.5"/>
<rect x="743" y="578" width="53" height="10" fill="#e8ecec" opacity="0.4"/>
<defs><linearGradient id="gr" gradientUnits="userSpaceOnUse" x1="0" y1="540" x2="0" y2="600"><stop offset="0.366" stop-color="#b81c28" stop-opacity="0"/><stop offset="0.368" stop-color="#b81c28" stop-opacity="0.88"/></linearGradient><linearGradient id="gb" gradientUnits="userSpaceOnUse" x1="0" y1="540" x2="0" y2="600"><stop offset="0.366" stop-color="#3c6cb8" stop-opacity="0"/><stop offset="0.368" stop-color="#3c6cb8" stop-opacity="0.88"/></linearGradient></defs>
<text class="cj" font-size="38" x="650" y="584" fill="url(#gr)" stroke="#e6a4b0" stroke-opacity="0.55" stroke-width="0.65" textLength="92" lengthAdjust="spacingAndGlyphs">易迪拓</text>
<text class="cj" font-size="29" x="742" y="576" fill="url(#gb)" stroke="#b4c0ea" stroke-opacity="0.6" stroke-width="0.65" textLength="54" lengthAdjust="spacingAndGlyphs">培训</text>
<text x="743" y="588" font-size="9.5" fill="#4a5a58" opacity="0.85" textLength="53" lengthAdjust="spacingAndGlyphs" font-weight="bold">专业培训课程</text>
<text x="651" y="598" font-size="10.5" fill="#1a1014" stroke="#e0d8dc" stroke-width="0.35" opacity="0.85" textLength="92" lengthAdjust="spacingAndGlyphs" font-weight="bold">射频和天线设计</text>
<text x="744" y="598" font-size="10" fill="#a02030" stroke="#e0d0d4" stroke-width="0.3" opacity="0.85" textLength="52" lengthAdjust="spacingAndGlyphs" font-weight="bold">培训课程推荐</text>
</svg>
</body></html>
